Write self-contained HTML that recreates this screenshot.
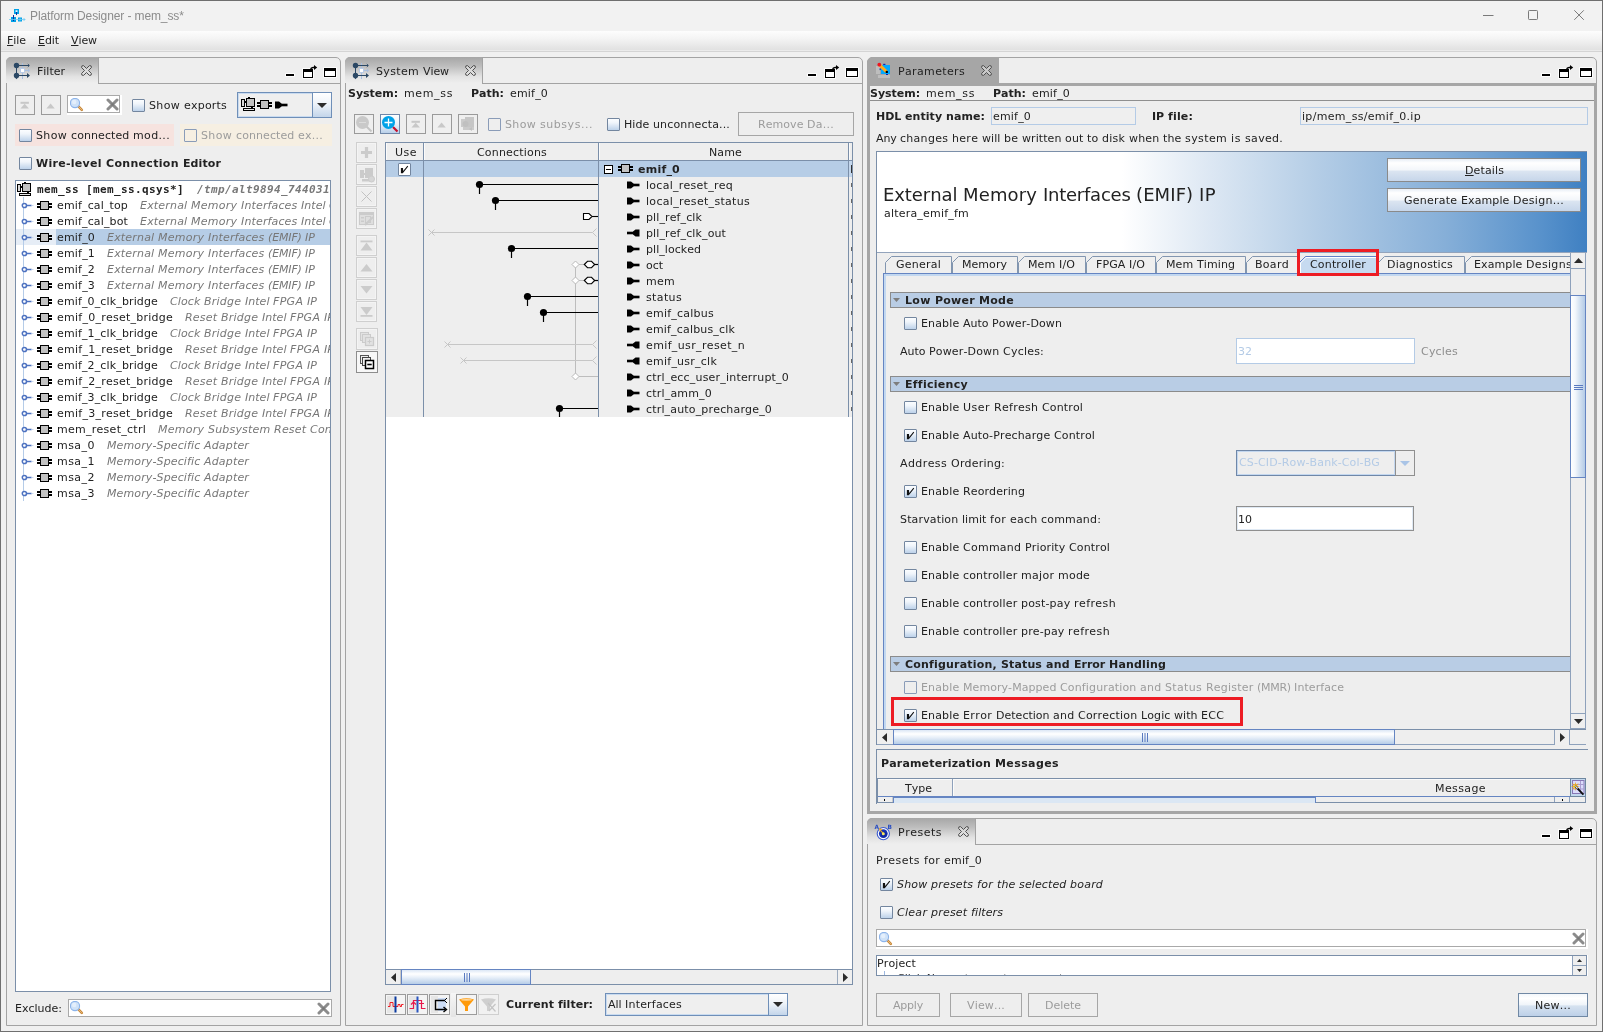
<!DOCTYPE html>
<html><head><meta charset="utf-8"><title>Platform Designer - mem_ss*</title>
<style>
html,body{margin:0;padding:0}
body{width:1603px;height:1032px;position:relative;overflow:hidden;background:#f0f0f0;font-family:"DejaVu Sans","Liberation Sans",sans-serif;color:#222222}
#root{left:0;top:0;width:1603px;height:1032px;will-change:transform;transform:translateZ(0)}
div,span,svg{position:absolute;box-sizing:border-box}
.t{white-space:nowrap;font-size:11px;line-height:13px;font-kerning:none;font-family:"DejaVu Sans","Liberation Sans",sans-serif}
.w{position:static;white-space:pre}
.b{font-weight:bold}
.i{font-style:italic}
.mb{font-family:"DejaVu Sans Mono","Liberation Mono",monospace;font-weight:bold}
.mbi{font-family:"DejaVu Sans Mono","Liberation Mono",monospace;font-weight:bold;font-style:italic}
u{text-decoration:underline;text-underline-offset:1px;text-decoration-thickness:1px}
.cb{width:13px;height:13px;border:1px solid #73869f;border-radius:1px;background:linear-gradient(180deg,#fbfdff 0%,#f0f5fb 35%,#bdd2ea 100%)}
.cbd{border-color:#8a9cb8;background:transparent}
.cbw{background:#fff}
.pn{background:#eeeeee;border:1px solid #a3a3a3;border-radius:5px 5px 0 0}
.tab{border-radius:5px 0 0 0;background:linear-gradient(180deg,#a6a6a6 0%,#bdbdbd 35%,#e2e2e2 75%,#eeeeee 100%)}
.tb{border:1px solid #9a9a9a;background:#efefef}
.tbd{border:1px solid #cfcfcf;background:#eeeeee;box-shadow:inset 0 0 0 1px #f4f4f4}
.btn{border:1px solid #8a8a8a;background:linear-gradient(180deg,#e8eef6 0%,#ffffff 18%,#f3f6fa 50%,#dbe5f1 55%,#c6d6ea 100%)}
.btnd{border:1px solid #a6a6a6;background:#eeeeee}
.sec{background:#b9cde5;border:1px solid #8b8b8b}
</style></head>
<body>
<div id="root">
<div style="left:0px;top:0px;width:1603px;height:31px;background:#f2f2f2"></div>
<div style="left:0px;top:31px;width:1603px;height:19px;background:linear-gradient(180deg,#fdfdfd 0%,#f4f4f4 40%,#e1e1e1 100%)"></div>
<div style="left:0px;top:50px;width:1603px;height:1px;background:#ebebeb"></div>
<div style="left:0px;top:51px;width:1603px;height:1px;background:#d4d4d4"></div>
<svg style="left:8px;top:8px;" width="18" height="14" viewBox="0 0 18 14"><rect x="6" y="1" width="5" height="5" fill="#00a2e8"/><rect x="7.5" y="2.3" width="2" height="1.6" fill="#fff"/><rect x="8" y="4" width="1" height="3" fill="#1030a0"/><rect x="3" y="9" width="5" height="5" fill="#00a2e8"/><rect x="5" y="7" width="1" height="6" fill="#1030a0"/><rect x="10" y="9.5" width="4" height="4" fill="#00a2e8"/><rect x="11.2" y="10.7" width="1.6" height="1.6" fill="#9fdcf6"/><path d="M1 11.5H17M15.5 10L17 11.5L15.5 13" stroke="#6cc8f0" stroke-width="0.8" fill="none"/></svg>
<span class="t" style="left:30px;top:9px;font-family:'Liberation Sans',sans-serif;font-size:12px;line-height:14px;letter-spacing:-0.11px;color:#8c8c8c">Platform Designer - mem_ss*</span>
<svg style="left:1478px;top:5px;" width="112" height="20" viewBox="0 0 112 20"><path d="M5 10.5H15.5" stroke="#7a7a7a" stroke-width="1"/><rect x="50.5" y="5.5" width="9" height="9" fill="none" stroke="#7a7a7a" stroke-width="1" rx="0.8"/><path d="M96.3 5.3L105.8 14.8M105.8 5.3L96.3 14.8" stroke="#7a7a7a" stroke-width="1"/></svg>
<span class="t" style="left:7px;top:34px;letter-spacing:-0.052px;"><u>F</u>ile</span>
<span class="t" style="left:38px;top:34px;letter-spacing:-0.075px;"><u>E</u>dit</span>
<span class="t" style="left:71px;top:34px;letter-spacing:-0.086px;"><u>V</u>iew</span>
<div class="pn" style="left:6px;top:57px;width:335px;height:969px;"></div>
<div class="tab" style="left:6px;top:57px;width:92px;height:26px;"></div>
<div style="left:98px;top:58px;width:1px;height:26px;background:#a3a3a3"></div>
<div style="left:98px;top:83px;width:243px;height:1px;background:#a3a3a3"></div>
<svg style="left:13px;top:62px;" width="18" height="18" viewBox="0 0 18 18"><rect x="9" y="1" width="1" height="16" fill="#a9bfe0"/><rect x="12" y="8" width="4" height="1" fill="#a9bfe0"/><path d="M15 6.5L17 8.5L15 10.5Z" fill="#a9bfe0"/><rect x="3" y="5" width="1" height="8" fill="#2b4865"/><rect x="5" y="3" width="11" height="1" fill="#2b4865"/><rect x="5" y="13" width="10" height="1" fill="#2b4865"/><circle cx="3.5" cy="3.5" r="2.7" fill="#2b4865"/><circle cx="3.5" cy="13.5" r="2.7" fill="#2b4865"/><path d="M3.5 17.2L1.6 15H5.4Z" fill="#2b4865"/><path d="M14.8 2L16.4 3.5L14.8 5" stroke="#2b4865" stroke-width="0.9" fill="none"/><path d="M14 11L17 13.5L14 16Z" fill="#2b4865"/><rect x="7.5" y="6.5" width="4" height="4" fill="#fff" stroke="#b9cbe6" stroke-width="1"/></svg>
<span class="t" style="left:37px;top:65px;letter-spacing:-0.007px;">Filter</span>
<svg style="left:81px;top:65px;" width="11" height="11" viewBox="0 0 11 11"><path d="M2.6 0.6Q0.2 0.2 0.6 2.6L3.5 5.5L0.6 8.4Q0.2 10.8 2.6 10.4L5.5 7.5L8.4 10.4Q10.8 10.8 10.4 8.4L7.5 5.5L10.4 2.6Q10.8 0.2 8.4 0.6L5.5 3.5Z" fill="#e6e6e6" fill-opacity=".55" stroke="#4f4f4f" stroke-width="1"/></svg>
<svg style="left:285px;top:64px;" width="52" height="15" viewBox="0 0 52 15"><g stroke="#fff" stroke-width="2" stroke-linejoin="round" opacity=".9"><rect x="1" y="10" width="8" height="2" fill="#fff"/><rect x="18" y="5" width="10" height="9"/><rect x="39" y="4" width="12" height="9"/></g><rect x="1" y="10" width="8" height="2" fill="#000"/><rect x="18.5" y="5.5" width="9" height="8" fill="#fff" stroke="#000"/><rect x="18" y="5" width="10" height="3" fill="#000"/><path d="M25.5 5.5Q26 3.3 28.5 3.5H30" stroke="#000" stroke-width="1.3" fill="none"/><path d="M29 1L32.2 3.5L29 6Z" fill="#000"/><rect x="39.5" y="4.5" width="11" height="8" fill="#fff" stroke="#000"/><rect x="39" y="4" width="12" height="3" fill="#000"/></svg>
<div class="tb" style="left:15px;top:95px;width:20px;height:20px;"></div>
<svg style="left:20px;top:101px;" width="10" height="8" viewBox="0 0 10 8"><rect x="0.5" y="0.8" width="8.4" height="2" fill="#c8c8c8"/><path d="M0.5 7.4H8.9L4.7 2.8Z" fill="#c8c8c8"/></svg>
<div class="tb" style="left:41px;top:95px;width:20px;height:20px;"></div>
<svg style="left:46px;top:102px;" width="10" height="7" viewBox="0 0 10 7"><path d="M0.4 6.4H8.8L4.6 1.4Z" fill="#c8c8c8"/></svg>
<div style="left:67px;top:95px;width:55px;height:20px;background:#fff"></div>
<div style="left:67px;top:95px;width:53px;height:18px;background:#fff;border:1px solid #a9a9a9"></div>
<svg style="left:70px;top:98px;" width="14" height="14" viewBox="0 0 14 14"><path d="M8.2 8.2L11.8 11.8" stroke="#c98a3c" stroke-width="2.6" stroke-linecap="round"/><path d="M8.6 8.6L11.6 11.6" stroke="#e8b878" stroke-width="1" stroke-linecap="round"/><circle cx="5" cy="5" r="4.6" fill="#cfe2f8" stroke="#8db4ea" stroke-width="1.1"/><circle cx="4.2" cy="4" r="2.2" fill="#e4effc"/></svg>
<svg style="left:106px;top:98px;" width="13" height="13" viewBox="0 0 13 13"><path d="M2 2L11 11M11 2L2 11" stroke="#8c8c8c" stroke-width="3" stroke-linecap="round"/><rect x="5.3" y="5.3" width="2.4" height="2.4" fill="#757575"/></svg>
<div class="cb" style="left:132px;top:99px"></div>
<span class="t" style="left:149px;top:99px;"><span class="w" style="letter-spacing:0.365px">Show </span><span class="w" style="letter-spacing:0.206px">exports</span></span>
<div style="left:237px;top:92px;width:95px;height:26px;border:1px solid #6f8fb8;background:#efefef;box-shadow:inset 0 0 0 1px #c9dbf0"></div>
<div style="left:312px;top:92px;width:20px;height:26px;border:1px solid #6f8fb8;background:linear-gradient(180deg,#ffffff 0%,#eef3f9 45%,#c3d5ea 100%)"></div>
<svg style="left:317px;top:103px;" width="10" height="5" viewBox="0 0 10 5"><path d="M0 0H10L5.0 5Z" fill="#2b2b2b"/></svg>
<svg style="left:241px;top:96px;" width="15" height="15" viewBox="0 0 15 15"><rect x="0" y="3" width="4" height="8" fill="#000"/><rect x="1" y="4" width="2" height="6" fill="#d8d8d8"/><rect x="4" y="5" width="1" height="2" fill="#000"/><rect x="7" y="1" width="2" height="1" fill="#000"/><rect x="5" y="2" width="9" height="9" fill="#000"/><rect x="6" y="3" width="7" height="7" fill="#c3c3c3"/><rect x="10" y="11" width="2" height="1" fill="#000"/><rect x="2" y="12" width="12" height="3" fill="#000"/><rect x="3" y="13" width="10" height="1" fill="#e8e8e8"/></svg>
<svg style="left:257px;top:100px;" width="15" height="10" viewBox="0 0 15 10"><rect x="0" y="2" width="15" height="2" fill="#000"/><rect x="0" y="5" width="15" height="2" fill="#000"/><rect x="3" y="0" width="9" height="9" fill="#000"/><rect x="4" y="1" width="7" height="7" fill="#c3c3c3"/></svg>
<svg style="left:275px;top:101px;" width="13" height="8" viewBox="0 0 13 8"><path d="M0 0.5H4L6.5 2.5V5.5L4 7.5H0Z" fill="#000"/><rect x="6" y="2.7" width="6.5" height="2.6" fill="#000"/></svg>
<div style="left:15px;top:124px;width:159px;height:22px;background:#f6e3df"></div>
<div class="cb" style="left:19px;top:129px"></div>
<span class="t" style="left:36px;top:129px;"><span class="w" style="letter-spacing:0.365px">Show </span><span class="w" style="letter-spacing:0.090px">connected </span><span class="w" style="letter-spacing:0.347px">mod...</span></span>
<div style="left:180px;top:124px;width:152px;height:22px;background:#f6efe2"></div>
<div class="cb cbd" style="left:184px;top:129px"></div>
<span class="t" style="left:201px;top:129px;color:#9c9c9c;"><span class="w" style="letter-spacing:0.365px">Show </span><span class="w" style="letter-spacing:0.090px">connected </span><span class="w" style="letter-spacing:0.247px">ex...</span></span>
<div class="cb" style="left:19px;top:157px"></div>
<span class="t b" style="left:36px;top:157px;"><span class="w" style="letter-spacing:0.289px">Wire-level </span><span class="w" style="letter-spacing:0.316px">Connection </span><span class="w" style="letter-spacing:0.100px">Editor</span></span>
<div style="left:15px;top:180px;width:316px;height:812px;background:#fff;border:1px solid #7b8fa9"></div>
<div style="left:16px;top:229px;width:40px;height:16px;background:#e6edf6"></div>
<div style="left:56px;top:229px;width:274px;height:16px;background:#b6cde6"></div>
<div style="left:23px;top:197px;width:1px;height:304px;background:#b5cce8"></div>
<svg style="left:17px;top:181px;" width="15" height="15" viewBox="0 0 15 15"><rect x="0" y="3" width="4" height="8" fill="#000"/><rect x="1" y="4" width="2" height="6" fill="#d8d8d8"/><rect x="4" y="5" width="1" height="2" fill="#000"/><rect x="7" y="1" width="2" height="1" fill="#000"/><rect x="5" y="2" width="9" height="9" fill="#000"/><rect x="6" y="3" width="7" height="7" fill="#c3c3c3"/><rect x="10" y="11" width="2" height="1" fill="#000"/><rect x="2" y="12" width="12" height="3" fill="#000"/><rect x="3" y="13" width="10" height="1" fill="#e8e8e8"/></svg>
<span class="t mb" style="left:37px;top:183px;"><span class="w" style="letter-spacing:0.377px">mem_ss </span><span class="w" style="letter-spacing:0.377px">[mem_ss.qsys*]</span></span>
<span class="t mbi" style="left:197px;top:183px;color:#787878;width:133px;overflow:hidden;letter-spacing:0.377px;">/tmp/alt9894_744031</span>
<div style="left:16px;top:181px;width:314px;height:810px;overflow:hidden">
<svg style="left:4.6px;top:20.5px;" width="13" height="7" viewBox="0 0 13 7"><path d="M5.5 3.5H10.6" stroke="#4d72c0" stroke-width="1.5"/><path d="M10.6 3.5H12.5" stroke="#c5d6ee" stroke-width="1"/><circle cx="3.4" cy="3.5" r="2.1" fill="#fff" stroke="#4d72c0" stroke-width="1.5"/></svg>
<svg style="left:21px;top:20px;" width="15" height="10" viewBox="0 0 15 10"><rect x="0" y="2" width="15" height="2" fill="#000"/><rect x="0" y="5" width="15" height="2" fill="#000"/><rect x="3" y="0" width="9" height="9" fill="#000"/><rect x="4" y="1" width="7" height="7" fill="#c3c3c3"/></svg>
<span class="t" style="left:41px;top:18px;letter-spacing:0.143px;">emif_cal_top</span>
<span class="t i" style="left:124px;top:18px;color:#777777;"><span class="w" style="letter-spacing:0.186px">External </span><span class="w" style="letter-spacing:0.253px">Memory </span><span class="w" style="letter-spacing:0.139px">Interfaces </span><span class="w" style="letter-spacing:0.025px">Intel </span><span class="w" style="letter-spacing:0.138px">Calibration </span><span class="w" style="letter-spacing:0.061px">IP</span></span>
<svg style="left:4.6px;top:36.5px;" width="13" height="7" viewBox="0 0 13 7"><path d="M5.5 3.5H10.6" stroke="#4d72c0" stroke-width="1.5"/><path d="M10.6 3.5H12.5" stroke="#c5d6ee" stroke-width="1"/><circle cx="3.4" cy="3.5" r="2.1" fill="#fff" stroke="#4d72c0" stroke-width="1.5"/></svg>
<svg style="left:21px;top:36px;" width="15" height="10" viewBox="0 0 15 10"><rect x="0" y="2" width="15" height="2" fill="#000"/><rect x="0" y="5" width="15" height="2" fill="#000"/><rect x="3" y="0" width="9" height="9" fill="#000"/><rect x="4" y="1" width="7" height="7" fill="#c3c3c3"/></svg>
<span class="t" style="left:41px;top:34px;letter-spacing:0.143px;">emif_cal_bot</span>
<span class="t i" style="left:124px;top:34px;color:#777777;"><span class="w" style="letter-spacing:0.186px">External </span><span class="w" style="letter-spacing:0.253px">Memory </span><span class="w" style="letter-spacing:0.139px">Interfaces </span><span class="w" style="letter-spacing:0.025px">Intel </span><span class="w" style="letter-spacing:0.138px">Calibration </span><span class="w" style="letter-spacing:0.061px">IP</span></span>
<svg style="left:4.6px;top:52.5px;" width="13" height="7" viewBox="0 0 13 7"><path d="M5.5 3.5H10.6" stroke="#4d72c0" stroke-width="1.5"/><path d="M10.6 3.5H12.5" stroke="#c5d6ee" stroke-width="1"/><circle cx="3.4" cy="3.5" r="2.1" fill="#fff" stroke="#4d72c0" stroke-width="1.5"/></svg>
<svg style="left:21px;top:52px;" width="15" height="10" viewBox="0 0 15 10"><rect x="0" y="2" width="15" height="2" fill="#000"/><rect x="0" y="5" width="15" height="2" fill="#000"/><rect x="3" y="0" width="9" height="9" fill="#000"/><rect x="4" y="1" width="7" height="7" fill="#c3c3c3"/></svg>
<span class="t" style="left:41px;top:50px;letter-spacing:0.182px;">emif_0</span>
<span class="t i" style="left:91px;top:50px;color:#777777;"><span class="w" style="letter-spacing:0.186px">External </span><span class="w" style="letter-spacing:0.253px">Memory </span><span class="w" style="letter-spacing:0.139px">Interfaces </span><span class="w" style="letter-spacing:-0.156px">(EMIF) </span><span class="w" style="letter-spacing:0.061px">IP</span></span>
<svg style="left:4.6px;top:68.5px;" width="13" height="7" viewBox="0 0 13 7"><path d="M5.5 3.5H10.6" stroke="#4d72c0" stroke-width="1.5"/><path d="M10.6 3.5H12.5" stroke="#c5d6ee" stroke-width="1"/><circle cx="3.4" cy="3.5" r="2.1" fill="#fff" stroke="#4d72c0" stroke-width="1.5"/></svg>
<svg style="left:21px;top:68px;" width="15" height="10" viewBox="0 0 15 10"><rect x="0" y="2" width="15" height="2" fill="#000"/><rect x="0" y="5" width="15" height="2" fill="#000"/><rect x="3" y="0" width="9" height="9" fill="#000"/><rect x="4" y="1" width="7" height="7" fill="#c3c3c3"/></svg>
<span class="t" style="left:41px;top:66px;letter-spacing:0.182px;">emif_1</span>
<span class="t i" style="left:91px;top:66px;color:#777777;"><span class="w" style="letter-spacing:0.186px">External </span><span class="w" style="letter-spacing:0.253px">Memory </span><span class="w" style="letter-spacing:0.139px">Interfaces </span><span class="w" style="letter-spacing:-0.156px">(EMIF) </span><span class="w" style="letter-spacing:0.061px">IP</span></span>
<svg style="left:4.6px;top:84.5px;" width="13" height="7" viewBox="0 0 13 7"><path d="M5.5 3.5H10.6" stroke="#4d72c0" stroke-width="1.5"/><path d="M10.6 3.5H12.5" stroke="#c5d6ee" stroke-width="1"/><circle cx="3.4" cy="3.5" r="2.1" fill="#fff" stroke="#4d72c0" stroke-width="1.5"/></svg>
<svg style="left:21px;top:84px;" width="15" height="10" viewBox="0 0 15 10"><rect x="0" y="2" width="15" height="2" fill="#000"/><rect x="0" y="5" width="15" height="2" fill="#000"/><rect x="3" y="0" width="9" height="9" fill="#000"/><rect x="4" y="1" width="7" height="7" fill="#c3c3c3"/></svg>
<span class="t" style="left:41px;top:82px;letter-spacing:0.182px;">emif_2</span>
<span class="t i" style="left:91px;top:82px;color:#777777;"><span class="w" style="letter-spacing:0.186px">External </span><span class="w" style="letter-spacing:0.253px">Memory </span><span class="w" style="letter-spacing:0.139px">Interfaces </span><span class="w" style="letter-spacing:-0.156px">(EMIF) </span><span class="w" style="letter-spacing:0.061px">IP</span></span>
<svg style="left:4.6px;top:100.5px;" width="13" height="7" viewBox="0 0 13 7"><path d="M5.5 3.5H10.6" stroke="#4d72c0" stroke-width="1.5"/><path d="M10.6 3.5H12.5" stroke="#c5d6ee" stroke-width="1"/><circle cx="3.4" cy="3.5" r="2.1" fill="#fff" stroke="#4d72c0" stroke-width="1.5"/></svg>
<svg style="left:21px;top:100px;" width="15" height="10" viewBox="0 0 15 10"><rect x="0" y="2" width="15" height="2" fill="#000"/><rect x="0" y="5" width="15" height="2" fill="#000"/><rect x="3" y="0" width="9" height="9" fill="#000"/><rect x="4" y="1" width="7" height="7" fill="#c3c3c3"/></svg>
<span class="t" style="left:41px;top:98px;letter-spacing:0.182px;">emif_3</span>
<span class="t i" style="left:91px;top:98px;color:#777777;"><span class="w" style="letter-spacing:0.186px">External </span><span class="w" style="letter-spacing:0.253px">Memory </span><span class="w" style="letter-spacing:0.139px">Interfaces </span><span class="w" style="letter-spacing:-0.156px">(EMIF) </span><span class="w" style="letter-spacing:0.061px">IP</span></span>
<svg style="left:4.6px;top:116.5px;" width="13" height="7" viewBox="0 0 13 7"><path d="M5.5 3.5H10.6" stroke="#4d72c0" stroke-width="1.5"/><path d="M10.6 3.5H12.5" stroke="#c5d6ee" stroke-width="1"/><circle cx="3.4" cy="3.5" r="2.1" fill="#fff" stroke="#4d72c0" stroke-width="1.5"/></svg>
<svg style="left:21px;top:116px;" width="15" height="10" viewBox="0 0 15 10"><rect x="0" y="2" width="15" height="2" fill="#000"/><rect x="0" y="5" width="15" height="2" fill="#000"/><rect x="3" y="0" width="9" height="9" fill="#000"/><rect x="4" y="1" width="7" height="7" fill="#c3c3c3"/></svg>
<span class="t" style="left:41px;top:114px;letter-spacing:0.137px;">emif_0_clk_bridge</span>
<span class="t i" style="left:154px;top:114px;color:#777777;"><span class="w" style="letter-spacing:0.103px">Clock </span><span class="w" style="letter-spacing:0.235px">Bridge </span><span class="w" style="letter-spacing:0.025px">Intel </span><span class="w" style="letter-spacing:0.299px">FPGA </span><span class="w" style="letter-spacing:0.061px">IP</span></span>
<svg style="left:4.6px;top:132.5px;" width="13" height="7" viewBox="0 0 13 7"><path d="M5.5 3.5H10.6" stroke="#4d72c0" stroke-width="1.5"/><path d="M10.6 3.5H12.5" stroke="#c5d6ee" stroke-width="1"/><circle cx="3.4" cy="3.5" r="2.1" fill="#fff" stroke="#4d72c0" stroke-width="1.5"/></svg>
<svg style="left:21px;top:132px;" width="15" height="10" viewBox="0 0 15 10"><rect x="0" y="2" width="15" height="2" fill="#000"/><rect x="0" y="5" width="15" height="2" fill="#000"/><rect x="3" y="0" width="9" height="9" fill="#000"/><rect x="4" y="1" width="7" height="7" fill="#c3c3c3"/></svg>
<span class="t" style="left:41px;top:130px;letter-spacing:0.247px;">emif_0_reset_bridge</span>
<span class="t i" style="left:169px;top:130px;color:#777777;"><span class="w" style="letter-spacing:0.214px">Reset </span><span class="w" style="letter-spacing:0.235px">Bridge </span><span class="w" style="letter-spacing:0.025px">Intel </span><span class="w" style="letter-spacing:0.299px">FPGA </span><span class="w" style="letter-spacing:0.061px">IP</span></span>
<svg style="left:4.6px;top:148.5px;" width="13" height="7" viewBox="0 0 13 7"><path d="M5.5 3.5H10.6" stroke="#4d72c0" stroke-width="1.5"/><path d="M10.6 3.5H12.5" stroke="#c5d6ee" stroke-width="1"/><circle cx="3.4" cy="3.5" r="2.1" fill="#fff" stroke="#4d72c0" stroke-width="1.5"/></svg>
<svg style="left:21px;top:148px;" width="15" height="10" viewBox="0 0 15 10"><rect x="0" y="2" width="15" height="2" fill="#000"/><rect x="0" y="5" width="15" height="2" fill="#000"/><rect x="3" y="0" width="9" height="9" fill="#000"/><rect x="4" y="1" width="7" height="7" fill="#c3c3c3"/></svg>
<span class="t" style="left:41px;top:146px;letter-spacing:0.137px;">emif_1_clk_bridge</span>
<span class="t i" style="left:154px;top:146px;color:#777777;"><span class="w" style="letter-spacing:0.103px">Clock </span><span class="w" style="letter-spacing:0.235px">Bridge </span><span class="w" style="letter-spacing:0.025px">Intel </span><span class="w" style="letter-spacing:0.299px">FPGA </span><span class="w" style="letter-spacing:0.061px">IP</span></span>
<svg style="left:4.6px;top:164.5px;" width="13" height="7" viewBox="0 0 13 7"><path d="M5.5 3.5H10.6" stroke="#4d72c0" stroke-width="1.5"/><path d="M10.6 3.5H12.5" stroke="#c5d6ee" stroke-width="1"/><circle cx="3.4" cy="3.5" r="2.1" fill="#fff" stroke="#4d72c0" stroke-width="1.5"/></svg>
<svg style="left:21px;top:164px;" width="15" height="10" viewBox="0 0 15 10"><rect x="0" y="2" width="15" height="2" fill="#000"/><rect x="0" y="5" width="15" height="2" fill="#000"/><rect x="3" y="0" width="9" height="9" fill="#000"/><rect x="4" y="1" width="7" height="7" fill="#c3c3c3"/></svg>
<span class="t" style="left:41px;top:162px;letter-spacing:0.247px;">emif_1_reset_bridge</span>
<span class="t i" style="left:169px;top:162px;color:#777777;"><span class="w" style="letter-spacing:0.214px">Reset </span><span class="w" style="letter-spacing:0.235px">Bridge </span><span class="w" style="letter-spacing:0.025px">Intel </span><span class="w" style="letter-spacing:0.299px">FPGA </span><span class="w" style="letter-spacing:0.061px">IP</span></span>
<svg style="left:4.6px;top:180.5px;" width="13" height="7" viewBox="0 0 13 7"><path d="M5.5 3.5H10.6" stroke="#4d72c0" stroke-width="1.5"/><path d="M10.6 3.5H12.5" stroke="#c5d6ee" stroke-width="1"/><circle cx="3.4" cy="3.5" r="2.1" fill="#fff" stroke="#4d72c0" stroke-width="1.5"/></svg>
<svg style="left:21px;top:180px;" width="15" height="10" viewBox="0 0 15 10"><rect x="0" y="2" width="15" height="2" fill="#000"/><rect x="0" y="5" width="15" height="2" fill="#000"/><rect x="3" y="0" width="9" height="9" fill="#000"/><rect x="4" y="1" width="7" height="7" fill="#c3c3c3"/></svg>
<span class="t" style="left:41px;top:178px;letter-spacing:0.137px;">emif_2_clk_bridge</span>
<span class="t i" style="left:154px;top:178px;color:#777777;"><span class="w" style="letter-spacing:0.103px">Clock </span><span class="w" style="letter-spacing:0.235px">Bridge </span><span class="w" style="letter-spacing:0.025px">Intel </span><span class="w" style="letter-spacing:0.299px">FPGA </span><span class="w" style="letter-spacing:0.061px">IP</span></span>
<svg style="left:4.6px;top:196.5px;" width="13" height="7" viewBox="0 0 13 7"><path d="M5.5 3.5H10.6" stroke="#4d72c0" stroke-width="1.5"/><path d="M10.6 3.5H12.5" stroke="#c5d6ee" stroke-width="1"/><circle cx="3.4" cy="3.5" r="2.1" fill="#fff" stroke="#4d72c0" stroke-width="1.5"/></svg>
<svg style="left:21px;top:196px;" width="15" height="10" viewBox="0 0 15 10"><rect x="0" y="2" width="15" height="2" fill="#000"/><rect x="0" y="5" width="15" height="2" fill="#000"/><rect x="3" y="0" width="9" height="9" fill="#000"/><rect x="4" y="1" width="7" height="7" fill="#c3c3c3"/></svg>
<span class="t" style="left:41px;top:194px;letter-spacing:0.247px;">emif_2_reset_bridge</span>
<span class="t i" style="left:169px;top:194px;color:#777777;"><span class="w" style="letter-spacing:0.214px">Reset </span><span class="w" style="letter-spacing:0.235px">Bridge </span><span class="w" style="letter-spacing:0.025px">Intel </span><span class="w" style="letter-spacing:0.299px">FPGA </span><span class="w" style="letter-spacing:0.061px">IP</span></span>
<svg style="left:4.6px;top:212.5px;" width="13" height="7" viewBox="0 0 13 7"><path d="M5.5 3.5H10.6" stroke="#4d72c0" stroke-width="1.5"/><path d="M10.6 3.5H12.5" stroke="#c5d6ee" stroke-width="1"/><circle cx="3.4" cy="3.5" r="2.1" fill="#fff" stroke="#4d72c0" stroke-width="1.5"/></svg>
<svg style="left:21px;top:212px;" width="15" height="10" viewBox="0 0 15 10"><rect x="0" y="2" width="15" height="2" fill="#000"/><rect x="0" y="5" width="15" height="2" fill="#000"/><rect x="3" y="0" width="9" height="9" fill="#000"/><rect x="4" y="1" width="7" height="7" fill="#c3c3c3"/></svg>
<span class="t" style="left:41px;top:210px;letter-spacing:0.137px;">emif_3_clk_bridge</span>
<span class="t i" style="left:154px;top:210px;color:#777777;"><span class="w" style="letter-spacing:0.103px">Clock </span><span class="w" style="letter-spacing:0.235px">Bridge </span><span class="w" style="letter-spacing:0.025px">Intel </span><span class="w" style="letter-spacing:0.299px">FPGA </span><span class="w" style="letter-spacing:0.061px">IP</span></span>
<svg style="left:4.6px;top:228.5px;" width="13" height="7" viewBox="0 0 13 7"><path d="M5.5 3.5H10.6" stroke="#4d72c0" stroke-width="1.5"/><path d="M10.6 3.5H12.5" stroke="#c5d6ee" stroke-width="1"/><circle cx="3.4" cy="3.5" r="2.1" fill="#fff" stroke="#4d72c0" stroke-width="1.5"/></svg>
<svg style="left:21px;top:228px;" width="15" height="10" viewBox="0 0 15 10"><rect x="0" y="2" width="15" height="2" fill="#000"/><rect x="0" y="5" width="15" height="2" fill="#000"/><rect x="3" y="0" width="9" height="9" fill="#000"/><rect x="4" y="1" width="7" height="7" fill="#c3c3c3"/></svg>
<span class="t" style="left:41px;top:226px;letter-spacing:0.247px;">emif_3_reset_bridge</span>
<span class="t i" style="left:169px;top:226px;color:#777777;"><span class="w" style="letter-spacing:0.214px">Reset </span><span class="w" style="letter-spacing:0.235px">Bridge </span><span class="w" style="letter-spacing:0.025px">Intel </span><span class="w" style="letter-spacing:0.299px">FPGA </span><span class="w" style="letter-spacing:0.061px">IP</span></span>
<svg style="left:4.6px;top:244.5px;" width="13" height="7" viewBox="0 0 13 7"><path d="M5.5 3.5H10.6" stroke="#4d72c0" stroke-width="1.5"/><path d="M10.6 3.5H12.5" stroke="#c5d6ee" stroke-width="1"/><circle cx="3.4" cy="3.5" r="2.1" fill="#fff" stroke="#4d72c0" stroke-width="1.5"/></svg>
<svg style="left:21px;top:244px;" width="15" height="10" viewBox="0 0 15 10"><rect x="0" y="2" width="15" height="2" fill="#000"/><rect x="0" y="5" width="15" height="2" fill="#000"/><rect x="3" y="0" width="9" height="9" fill="#000"/><rect x="4" y="1" width="7" height="7" fill="#c3c3c3"/></svg>
<span class="t" style="left:41px;top:242px;letter-spacing:0.269px;">mem_reset_ctrl</span>
<span class="t i" style="left:142px;top:242px;color:#777777;"><span class="w" style="letter-spacing:0.253px">Memory </span><span class="w" style="letter-spacing:0.180px">Subsystem </span><span class="w" style="letter-spacing:0.214px">Reset </span><span class="w" style="letter-spacing:0.165px">Controller</span></span>
<svg style="left:4.6px;top:260.5px;" width="13" height="7" viewBox="0 0 13 7"><path d="M5.5 3.5H10.6" stroke="#4d72c0" stroke-width="1.5"/><path d="M10.6 3.5H12.5" stroke="#c5d6ee" stroke-width="1"/><circle cx="3.4" cy="3.5" r="2.1" fill="#fff" stroke="#4d72c0" stroke-width="1.5"/></svg>
<svg style="left:21px;top:260px;" width="15" height="10" viewBox="0 0 15 10"><rect x="0" y="2" width="15" height="2" fill="#000"/><rect x="0" y="5" width="15" height="2" fill="#000"/><rect x="3" y="0" width="9" height="9" fill="#000"/><rect x="4" y="1" width="7" height="7" fill="#c3c3c3"/></svg>
<span class="t" style="left:41px;top:258px;letter-spacing:0.463px;">msa_0</span>
<span class="t i" style="left:91px;top:258px;color:#777777;"><span class="w" style="letter-spacing:0.124px">Memory-Specific </span><span class="w" style="letter-spacing:0.167px">Adapter</span></span>
<svg style="left:4.6px;top:276.5px;" width="13" height="7" viewBox="0 0 13 7"><path d="M5.5 3.5H10.6" stroke="#4d72c0" stroke-width="1.5"/><path d="M10.6 3.5H12.5" stroke="#c5d6ee" stroke-width="1"/><circle cx="3.4" cy="3.5" r="2.1" fill="#fff" stroke="#4d72c0" stroke-width="1.5"/></svg>
<svg style="left:21px;top:276px;" width="15" height="10" viewBox="0 0 15 10"><rect x="0" y="2" width="15" height="2" fill="#000"/><rect x="0" y="5" width="15" height="2" fill="#000"/><rect x="3" y="0" width="9" height="9" fill="#000"/><rect x="4" y="1" width="7" height="7" fill="#c3c3c3"/></svg>
<span class="t" style="left:41px;top:274px;letter-spacing:0.463px;">msa_1</span>
<span class="t i" style="left:91px;top:274px;color:#777777;"><span class="w" style="letter-spacing:0.124px">Memory-Specific </span><span class="w" style="letter-spacing:0.167px">Adapter</span></span>
<svg style="left:4.6px;top:292.5px;" width="13" height="7" viewBox="0 0 13 7"><path d="M5.5 3.5H10.6" stroke="#4d72c0" stroke-width="1.5"/><path d="M10.6 3.5H12.5" stroke="#c5d6ee" stroke-width="1"/><circle cx="3.4" cy="3.5" r="2.1" fill="#fff" stroke="#4d72c0" stroke-width="1.5"/></svg>
<svg style="left:21px;top:292px;" width="15" height="10" viewBox="0 0 15 10"><rect x="0" y="2" width="15" height="2" fill="#000"/><rect x="0" y="5" width="15" height="2" fill="#000"/><rect x="3" y="0" width="9" height="9" fill="#000"/><rect x="4" y="1" width="7" height="7" fill="#c3c3c3"/></svg>
<span class="t" style="left:41px;top:290px;letter-spacing:0.463px;">msa_2</span>
<span class="t i" style="left:91px;top:290px;color:#777777;"><span class="w" style="letter-spacing:0.124px">Memory-Specific </span><span class="w" style="letter-spacing:0.167px">Adapter</span></span>
<svg style="left:4.6px;top:308.5px;" width="13" height="7" viewBox="0 0 13 7"><path d="M5.5 3.5H10.6" stroke="#4d72c0" stroke-width="1.5"/><path d="M10.6 3.5H12.5" stroke="#c5d6ee" stroke-width="1"/><circle cx="3.4" cy="3.5" r="2.1" fill="#fff" stroke="#4d72c0" stroke-width="1.5"/></svg>
<svg style="left:21px;top:308px;" width="15" height="10" viewBox="0 0 15 10"><rect x="0" y="2" width="15" height="2" fill="#000"/><rect x="0" y="5" width="15" height="2" fill="#000"/><rect x="3" y="0" width="9" height="9" fill="#000"/><rect x="4" y="1" width="7" height="7" fill="#c3c3c3"/></svg>
<span class="t" style="left:41px;top:306px;letter-spacing:0.463px;">msa_3</span>
<span class="t i" style="left:91px;top:306px;color:#777777;"><span class="w" style="letter-spacing:0.124px">Memory-Specific </span><span class="w" style="letter-spacing:0.167px">Adapter</span></span>
</div>
<span class="t" style="left:15px;top:1002px;letter-spacing:0.001px;">Exclude:</span>
<div style="left:68px;top:999px;width:264px;height:18px;background:#fff;border:1px solid #a9a9a9"></div>
<svg style="left:70px;top:1001px;" width="14" height="14" viewBox="0 0 14 14"><path d="M8.2 8.2L11.8 11.8" stroke="#c98a3c" stroke-width="2.6" stroke-linecap="round"/><path d="M8.6 8.6L11.6 11.6" stroke="#e8b878" stroke-width="1" stroke-linecap="round"/><circle cx="5" cy="5" r="4.6" fill="#cfe2f8" stroke="#8db4ea" stroke-width="1.1"/><circle cx="4.2" cy="4" r="2.2" fill="#e4effc"/></svg>
<svg style="left:317px;top:1002px;" width="13" height="13" viewBox="0 0 13 13"><path d="M2 2L11 11M11 2L2 11" stroke="#8c8c8c" stroke-width="3" stroke-linecap="round"/><rect x="5.3" y="5.3" width="2.4" height="2.4" fill="#757575"/></svg>
<div class="pn" style="left:345px;top:57px;width:518px;height:969px;"></div>
<div class="tab" style="left:345px;top:57px;width:137px;height:26px;"></div>
<div style="left:482px;top:58px;width:1px;height:26px;background:#a3a3a3"></div>
<div style="left:482px;top:83px;width:381px;height:1px;background:#a3a3a3"></div>
<svg style="left:352px;top:62px;" width="18" height="18" viewBox="0 0 18 18"><rect x="9" y="1" width="1" height="16" fill="#a9bfe0"/><rect x="12" y="8" width="4" height="1" fill="#a9bfe0"/><path d="M15 6.5L17 8.5L15 10.5Z" fill="#a9bfe0"/><rect x="3" y="5" width="1" height="8" fill="#2b4865"/><rect x="5" y="3" width="11" height="1" fill="#2b4865"/><rect x="5" y="13" width="10" height="1" fill="#2b4865"/><circle cx="3.5" cy="3.5" r="2.7" fill="#2b4865"/><circle cx="3.5" cy="13.5" r="2.7" fill="#2b4865"/><path d="M3.5 17.2L1.6 15H5.4Z" fill="#2b4865"/><path d="M14.8 2L16.4 3.5L14.8 5" stroke="#2b4865" stroke-width="0.9" fill="none"/><path d="M14 11L17 13.5L14 16Z" fill="#2b4865"/><rect x="7.5" y="6.5" width="4" height="4" fill="#fff" stroke="#b9cbe6" stroke-width="1"/></svg>
<span class="t" style="left:376px;top:65px;"><span class="w" style="letter-spacing:0.355px">System </span><span class="w" style="letter-spacing:-0.086px">View</span></span>
<svg style="left:465px;top:65px;" width="11" height="11" viewBox="0 0 11 11"><path d="M2.6 0.6Q0.2 0.2 0.6 2.6L3.5 5.5L0.6 8.4Q0.2 10.8 2.6 10.4L5.5 7.5L8.4 10.4Q10.8 10.8 10.4 8.4L7.5 5.5L10.4 2.6Q10.8 0.2 8.4 0.6L5.5 3.5Z" fill="#e6e6e6" fill-opacity=".55" stroke="#4f4f4f" stroke-width="1"/></svg>
<svg style="left:807px;top:64px;" width="52" height="15" viewBox="0 0 52 15"><g stroke="#fff" stroke-width="2" stroke-linejoin="round" opacity=".9"><rect x="1" y="10" width="8" height="2" fill="#fff"/><rect x="18" y="5" width="10" height="9"/><rect x="39" y="4" width="12" height="9"/></g><rect x="1" y="10" width="8" height="2" fill="#000"/><rect x="18.5" y="5.5" width="9" height="8" fill="#fff" stroke="#000"/><rect x="18" y="5" width="10" height="3" fill="#000"/><path d="M25.5 5.5Q26 3.3 28.5 3.5H30" stroke="#000" stroke-width="1.3" fill="none"/><path d="M29 1L32.2 3.5L29 6Z" fill="#000"/><rect x="39.5" y="4.5" width="11" height="8" fill="#fff" stroke="#000"/><rect x="39" y="4" width="12" height="3" fill="#000"/></svg>
<span class="t b" style="left:348px;top:87px;letter-spacing:-0.031px;">System:</span>
<span class="t" style="left:404px;top:87px;letter-spacing:0.640px;">mem_ss</span>
<span class="t b" style="left:471px;top:87px;letter-spacing:0.005px;">Path:</span>
<span class="t" style="left:510px;top:87px;letter-spacing:0.182px;">emif_0</span>
<div class="tb" style="left:354px;top:114px;width:20px;height:20px;"></div>
<svg style="left:355px;top:115px;" width="18" height="18" viewBox="0 0 18 18"><path d="M11 11L16.5 16.5" stroke="#c4c4c4" stroke-width="2"/><circle cx="7.5" cy="7.5" r="6.5" fill="#c9c9c9"/><rect x="4" y="7" width="7" height="1" fill="#dcdcdc"/></svg>
<div style="left:380px;top:114px;width:20px;height:20px;border:1px solid #6f87a8;background:linear-gradient(180deg,#ffffff 0%,#eaf1f9 50%,#b9d0ea 100%)"></div>
<svg style="left:381px;top:115px;" width="18" height="18" viewBox="0 0 18 18"><path d="M12 12L16.5 16.5" stroke="#c4102c" stroke-width="2.2"/><circle cx="7.5" cy="7.4" r="6.5" fill="#00a2e8"/><path d="M7.5 3.5V11.5M3.5 7.5H11.5" stroke="#fff" stroke-width="1.3"/></svg>
<div class="tb" style="left:406px;top:114px;width:20px;height:20px;"></div>
<svg style="left:411px;top:120px;" width="10" height="8" viewBox="0 0 10 8"><rect x="0.5" y="0.8" width="8.4" height="2" fill="#c8c8c8"/><path d="M0.5 7.4H8.9L4.7 2.8Z" fill="#c8c8c8"/></svg>
<div class="tb" style="left:432px;top:114px;width:20px;height:20px;"></div>
<svg style="left:437px;top:121px;" width="10" height="7" viewBox="0 0 10 7"><path d="M0.4 6.4H8.8L4.6 1.4Z" fill="#c8c8c8"/></svg>
<div class="tb" style="left:458px;top:114px;width:20px;height:20px;"></div>
<svg style="left:460px;top:116px;" width="16" height="16" viewBox="0 0 16 16"><rect x="1" y="3" width="6" height="8" fill="#cbcbcb"/><rect x="5" y="1" width="9" height="10" fill="#c6c6c6"/><rect x="3" y="11" width="11" height="3" fill="#cbcbcb"/><circle cx="5.5" cy="8" r="3" fill="#c0c0c0"/><path d="M9 13L12 15L12 11Z" fill="#c0c0c0"/></svg>
<div class="cb cbd" style="left:488px;top:118px"></div>
<span class="t" style="left:505px;top:118px;color:#9c9c9c;"><span class="w" style="letter-spacing:0.365px">Show </span><span class="w" style="letter-spacing:0.539px">subsys...</span></span>
<div class="cb" style="left:607px;top:118px"></div>
<span class="t" style="left:624px;top:118px;"><span class="w" style="letter-spacing:0.085px">Hide </span><span class="w" style="letter-spacing:0.152px">unconnecta...</span></span>
<div class="btnd" style="left:738px;top:112px;width:116px;height:24px;"></div>
<span class="t" style="left:758px;top:118px;color:#9c9c9c;"><span class="w" style="letter-spacing:0.053px">Remove </span><span class="w" style="letter-spacing:0.260px">Da...</span></span>
<div class="tbd" style="left:356px;top:142px;width:21px;height:21px;"></div>
<div class="tbd" style="left:356px;top:164px;width:21px;height:21px;"></div>
<div class="tbd" style="left:356px;top:186px;width:21px;height:21px;"></div>
<div class="tbd" style="left:356px;top:208px;width:21px;height:21px;"></div>
<div class="tbd" style="left:356px;top:235px;width:21px;height:21px;"></div>
<div class="tbd" style="left:356px;top:257px;width:21px;height:21px;"></div>
<div class="tbd" style="left:356px;top:279px;width:21px;height:21px;"></div>
<div class="tbd" style="left:356px;top:301px;width:21px;height:21px;"></div>
<div class="tbd" style="left:356px;top:328px;width:22px;height:22px;"></div>
<div style="left:356px;top:351px;width:22px;height:22px;border:1px solid #8d8d8d;background:#f7f7f7"></div>
<svg style="left:356px;top:142px;" width="21" height="21" viewBox="0 0 21 21"><path d="M10.5 5V16M5 10.5H16" stroke="#cbcbcb" stroke-width="3.2"/></svg>
<svg style="left:356px;top:164px;" width="21" height="21" viewBox="0 0 21 21"><rect x="4" y="6" width="4" height="8" fill="#cbcbcb"/><rect x="8" y="9" width="2" height="2" fill="#cbcbcb"/><rect x="9" y="4" width="8" height="10" fill="#cbcbcb"/><rect x="6" y="15" width="11" height="2.5" fill="#cbcbcb"/><circle cx="15.5" cy="15" r="3" fill="#d6d6d6" stroke="#cbcbcb"/></svg>
<svg style="left:356px;top:186px;" width="21" height="21" viewBox="0 0 21 21"><path d="M5.5 5.5L15.5 15.5M15.5 5.5L5.5 15.5" stroke="#c2c2c2" stroke-width="1"/></svg>
<svg style="left:356px;top:208px;" width="21" height="21" viewBox="0 0 21 21"><rect x="3.5" y="4.5" width="14" height="12" fill="#dedede" stroke="#cbcbcb"/><rect x="3" y="4" width="15" height="3" fill="#cbcbcb"/><rect x="5" y="9" width="3" height="1.5" fill="#cbcbcb"/><rect x="5" y="12.5" width="3" height="1.5" fill="#cbcbcb"/><rect x="9.5" y="8.5" width="5" height="6" fill="none" stroke="#cbcbcb"/><path d="M9 17L17 9" stroke="#cbcbcb" stroke-width="2.2"/></svg>
<svg style="left:356px;top:235px;" width="21" height="21" viewBox="0 0 21 21"><rect x="4.5" y="5.5" width="12" height="1.8" fill="#cbcbcb"/><path d="M4.5 15.5H16.5L10.5 7.5Z" fill="#cbcbcb"/></svg>
<svg style="left:356px;top:257px;" width="21" height="21" viewBox="0 0 21 21"><path d="M4.5 14.5H16.5L10.5 7Z" fill="#cbcbcb"/></svg>
<svg style="left:356px;top:279px;" width="21" height="21" viewBox="0 0 21 21"><path d="M4.5 7H16.5L10.5 14.5Z" fill="#cbcbcb"/></svg>
<svg style="left:356px;top:301px;" width="21" height="21" viewBox="0 0 21 21"><rect x="4.5" y="14" width="12" height="1.8" fill="#cbcbcb"/><path d="M4.5 6H16.5L10.5 14Z" fill="#cbcbcb"/></svg>
<svg style="left:356px;top:328px;" width="22" height="22" viewBox="0 0 22 22"><rect x="4.5" y="4.5" width="8" height="8" fill="#e2e2e2" stroke="#cbcbcb"/><rect x="6.5" y="6.5" width="8" height="8" fill="#e2e2e2" stroke="#cbcbcb"/><rect x="9.5" y="9.5" width="8" height="8" fill="#e2e2e2" stroke="#cbcbcb" stroke-width="1.2"/><path d="M13.5 11.5V15.5M11.5 13.5H15.5" stroke="#cbcbcb"/></svg>
<svg style="left:356px;top:351px;" width="22" height="22" viewBox="0 0 22 22"><rect x="4.5" y="4.5" width="8" height="8" fill="#f0f0f0" stroke="#555"/><rect x="6.5" y="6.5" width="8" height="8" fill="#f0f0f0" stroke="#444"/><rect x="9.5" y="9.5" width="8" height="8" fill="#fff" stroke="#000" stroke-width="1.5"/><path d="M11.3 13.5H15.7" stroke="#000" stroke-width="1.6"/></svg>
<div style="left:385px;top:142px;width:468px;height:843px;background:#fff;border:1px solid #7b8fa9"></div>
<div style="left:386px;top:143px;width:466px;height:274px;background:#eeeeee"></div>
<div style="left:386px;top:161px;width:466px;height:16px;background:#b6cde6"></div>
<div style="left:386px;top:160px;width:466px;height:1px;background:#7b8fa9"></div>
<div style="left:423px;top:143px;width:1px;height:274px;background:#7b8fa9"></div>
<div style="left:424px;top:143px;width:1px;height:17px;background:#fbfbfb"></div>
<div style="left:598px;top:143px;width:1px;height:274px;background:#7b8fa9"></div>
<div style="left:599px;top:143px;width:1px;height:17px;background:#fbfbfb"></div>
<div style="left:848px;top:143px;width:1px;height:274px;background:#7b8fa9"></div>
<div style="left:849px;top:143px;width:1px;height:17px;background:#fbfbfb"></div>
<div style="left:386px;top:143px;width:1px;height:17px;background:#fbfbfb"></div>
<span class="t" style="left:395px;top:146px;letter-spacing:0.483px;">Use</span>
<span class="t" style="left:477px;top:146px;letter-spacing:0.184px;">Connections</span>
<span class="t" style="left:709px;top:146px;letter-spacing:0.137px;">Name</span>
<div class="cb cbw" style="left:398px;top:163px"><svg width="13" height="13" viewBox="0 0 13 13" style="left:-1px;top:-1px"><path d="M2.9 5H5L5.2 8L9.4 2.8L10.2 3.6L4.8 10.2H2.9Z" fill="#111"/></svg></div>
<svg style="left:604px;top:165px;" width="9" height="9" viewBox="0 0 9 9"><rect x="0.5" y="0.5" width="8" height="8" fill="#fff" stroke="#000"/><rect x="2" y="4" width="5" height="1" fill="#000"/></svg>
<svg style="left:618px;top:164px;" width="15" height="10" viewBox="0 0 15 10"><rect x="0" y="2" width="15" height="2" fill="#000"/><rect x="0" y="5" width="15" height="2" fill="#000"/><rect x="3" y="0" width="9" height="9" fill="#000"/><rect x="4" y="1" width="7" height="7" fill="#c3c3c3"/></svg>
<span class="t b" style="left:638px;top:163px;letter-spacing:0.228px;">emif_0</span>
<svg style="left:627px;top:181px;" width="13" height="8" viewBox="0 0 13 8"><path d="M0 0.5H4L6.5 2.5V5.5L4 7.5H0Z" fill="#000"/><rect x="6" y="2.7" width="6.5" height="2.6" fill="#000"/></svg>
<span class="t" style="left:646px;top:179px;letter-spacing:0.266px;">local_reset_req</span>
<svg style="left:627px;top:197px;" width="13" height="8" viewBox="0 0 13 8"><path d="M0 0.5H4L6.5 2.5V5.5L4 7.5H0Z" fill="#000"/><rect x="6" y="2.7" width="6.5" height="2.6" fill="#000"/></svg>
<span class="t" style="left:646px;top:195px;letter-spacing:0.304px;">local_reset_status</span>
<svg style="left:627px;top:213px;" width="13" height="8" viewBox="0 0 13 8"><path d="M0 0.5H4L6.5 2.5V5.5L4 7.5H0Z" fill="#000"/><rect x="6" y="2.7" width="6.5" height="2.6" fill="#000"/></svg>
<span class="t" style="left:646px;top:211px;letter-spacing:0.115px;">pll_ref_clk</span>
<svg style="left:627px;top:229px;" width="13" height="8" viewBox="0 0 13 8"><path d="M12.5 0.5H8.5L6 2.5V5.5L8.5 7.5H12.5Z" fill="#000"/><rect x="0" y="2.7" width="6.5" height="2.6" fill="#000"/></svg>
<span class="t" style="left:646px;top:227px;letter-spacing:0.117px;">pll_ref_clk_out</span>
<svg style="left:627px;top:245px;" width="13" height="8" viewBox="0 0 13 8"><path d="M0 0.5H4L6.5 2.5V5.5L4 7.5H0Z" fill="#000"/><rect x="6" y="2.7" width="6.5" height="2.6" fill="#000"/></svg>
<span class="t" style="left:646px;top:243px;letter-spacing:0.045px;">pll_locked</span>
<svg style="left:627px;top:261px;" width="13" height="8" viewBox="0 0 13 8"><path d="M0 0.5H4L6.5 2.5V5.5L4 7.5H0Z" fill="#000"/><rect x="6" y="2.7" width="6.5" height="2.6" fill="#000"/></svg>
<span class="t" style="left:646px;top:259px;letter-spacing:-0.030px;">oct</span>
<svg style="left:627px;top:277px;" width="13" height="8" viewBox="0 0 13 8"><path d="M0 0.5H4L6.5 2.5V5.5L4 7.5H0Z" fill="#000"/><rect x="6" y="2.7" width="6.5" height="2.6" fill="#000"/></svg>
<span class="t" style="left:646px;top:275px;letter-spacing:0.267px;">mem</span>
<svg style="left:627px;top:293px;" width="13" height="8" viewBox="0 0 13 8"><path d="M0 0.5H4L6.5 2.5V5.5L4 7.5H0Z" fill="#000"/><rect x="6" y="2.7" width="6.5" height="2.6" fill="#000"/></svg>
<span class="t" style="left:646px;top:291px;letter-spacing:0.367px;">status</span>
<svg style="left:627px;top:309px;" width="13" height="8" viewBox="0 0 13 8"><path d="M0 0.5H4L6.5 2.5V5.5L4 7.5H0Z" fill="#000"/><rect x="6" y="2.7" width="6.5" height="2.6" fill="#000"/></svg>
<span class="t" style="left:646px;top:307px;letter-spacing:0.233px;">emif_calbus</span>
<svg style="left:627px;top:325px;" width="13" height="8" viewBox="0 0 13 8"><path d="M0 0.5H4L6.5 2.5V5.5L4 7.5H0Z" fill="#000"/><rect x="6" y="2.7" width="6.5" height="2.6" fill="#000"/></svg>
<span class="t" style="left:646px;top:323px;letter-spacing:0.172px;">emif_calbus_clk</span>
<svg style="left:627px;top:341px;" width="13" height="8" viewBox="0 0 13 8"><path d="M12.5 0.5H8.5L6 2.5V5.5L8.5 7.5H12.5Z" fill="#000"/><rect x="0" y="2.7" width="6.5" height="2.6" fill="#000"/></svg>
<span class="t" style="left:646px;top:339px;letter-spacing:0.362px;">emif_usr_reset_n</span>
<svg style="left:627px;top:357px;" width="13" height="8" viewBox="0 0 13 8"><path d="M12.5 0.5H8.5L6 2.5V5.5L8.5 7.5H12.5Z" fill="#000"/><rect x="0" y="2.7" width="6.5" height="2.6" fill="#000"/></svg>
<span class="t" style="left:646px;top:355px;letter-spacing:0.241px;">emif_usr_clk</span>
<svg style="left:627px;top:373px;" width="13" height="8" viewBox="0 0 13 8"><path d="M0 0.5H4L6.5 2.5V5.5L4 7.5H0Z" fill="#000"/><rect x="6" y="2.7" width="6.5" height="2.6" fill="#000"/></svg>
<span class="t" style="left:646px;top:371px;letter-spacing:0.191px;">ctrl_ecc_user_interrupt_0</span>
<svg style="left:627px;top:389px;" width="13" height="8" viewBox="0 0 13 8"><path d="M0 0.5H4L6.5 2.5V5.5L4 7.5H0Z" fill="#000"/><rect x="6" y="2.7" width="6.5" height="2.6" fill="#000"/></svg>
<span class="t" style="left:646px;top:387px;letter-spacing:0.189px;">ctrl_amm_0</span>
<svg style="left:627px;top:405px;" width="13" height="8" viewBox="0 0 13 8"><path d="M0 0.5H4L6.5 2.5V5.5L4 7.5H0Z" fill="#000"/><rect x="6" y="2.7" width="6.5" height="2.6" fill="#000"/></svg>
<span class="t" style="left:646px;top:403px;letter-spacing:0.167px;">ctrl_auto_precharge_0</span>
<div style="left:849px;top:161px;width:3px;height:16px;background:#c3d6ec"></div>
<div style="left:851px;top:165px;width:1px;height:8px;background:#333"></div>
<div style="left:851px;top:183px;width:1px;height:4px;background:#444;opacity:.8"></div>
<div style="left:851px;top:199px;width:1px;height:4px;background:#444;opacity:.8"></div>
<div style="left:851px;top:215px;width:1px;height:4px;background:#444;opacity:.8"></div>
<div style="left:851px;top:231px;width:1px;height:4px;background:#444;opacity:.8"></div>
<div style="left:851px;top:247px;width:1px;height:4px;background:#444;opacity:.8"></div>
<div style="left:851px;top:263px;width:1px;height:4px;background:#444;opacity:.8"></div>
<div style="left:851px;top:279px;width:1px;height:4px;background:#444;opacity:.8"></div>
<div style="left:851px;top:295px;width:1px;height:4px;background:#444;opacity:.8"></div>
<div style="left:851px;top:311px;width:1px;height:4px;background:#444;opacity:.8"></div>
<div style="left:851px;top:327px;width:1px;height:4px;background:#444;opacity:.8"></div>
<div style="left:851px;top:343px;width:1px;height:4px;background:#444;opacity:.8"></div>
<div style="left:851px;top:359px;width:1px;height:4px;background:#444;opacity:.8"></div>
<div style="left:851px;top:375px;width:1px;height:4px;background:#444;opacity:.8"></div>
<div style="left:851px;top:391px;width:1px;height:4px;background:#444;opacity:.8"></div>
<div style="left:851px;top:407px;width:1px;height:4px;background:#444;opacity:.8"></div>
<svg style="left:424px;top:161px;overflow:hidden" width="174" height="256" viewBox="0 0 174 256"><path d="M151.5 103.5V215.5" stroke="#bdbdbd" stroke-width="1"/><path d="M55.5 23.5H174" stroke="#000" stroke-width="1.2"/><path d="M55.5 23.5V33.0" stroke="#000" stroke-width="1.2"/><circle cx="55.5" cy="23.5" r="3.6" fill="#000"/><path d="M71.5 39.5H174" stroke="#000" stroke-width="1.2"/><path d="M71.5 39.5V49.0" stroke="#000" stroke-width="1.2"/><circle cx="71.5" cy="39.5" r="3.6" fill="#000"/><path d="M168 55.5H174" stroke="#000" stroke-width="1.1"/><path d="M159.5 52.5H165L168 55.5L165 58.5H159.5Z" fill="#fff" stroke="#000" stroke-width="1.1"/><path d="M7.5 71.5H168.5" stroke="#c6c6c6" stroke-width="1"/><path d="M4.5 68.5L10.5 74.5M10.5 68.5L4.5 74.5" stroke="#c6c6c6" stroke-width="1"/><path d="M172.5 67.5L168.5 71.5L172.5 75.5" stroke="#c6c6c6" stroke-width="1" fill="none"/><path d="M87.5 87.5H174" stroke="#000" stroke-width="1.2"/><path d="M87.5 87.5V97.0" stroke="#000" stroke-width="1.2"/><circle cx="87.5" cy="87.5" r="3.6" fill="#000"/><path d="M151.5 103.5H162" stroke="#bdbdbd" stroke-width="1"/><path d="M170 103.5H174" stroke="#000" stroke-width="1.2"/><path d="M160.3 103.5L163.5 100.3H167.5L170.7 103.5L167.5 106.7H163.5Z" fill="#fff" stroke="#000" stroke-width="1.1"/><path d="M148.0 103.5L151.5 100.0L155.0 103.5L151.5 107.0Z" fill="#fff" stroke="#b9b9b9" stroke-width="1"/><path d="M151.5 119.5H162" stroke="#bdbdbd" stroke-width="1"/><path d="M170 119.5H174" stroke="#000" stroke-width="1.2"/><path d="M160.3 119.5L163.5 116.3H167.5L170.7 119.5L167.5 122.7H163.5Z" fill="#fff" stroke="#000" stroke-width="1.1"/><path d="M148.0 119.5L151.5 116.0L155.0 119.5L151.5 123.0Z" fill="#fff" stroke="#b9b9b9" stroke-width="1"/><path d="M103.5 135.5H174" stroke="#000" stroke-width="1.2"/><path d="M103.5 135.5V145.0" stroke="#000" stroke-width="1.2"/><circle cx="103.5" cy="135.5" r="3.6" fill="#000"/><path d="M119.5 151.5H174" stroke="#000" stroke-width="1.2"/><path d="M119.5 151.5V161.0" stroke="#000" stroke-width="1.2"/><circle cx="119.5" cy="151.5" r="3.6" fill="#000"/><path d="M23.5 183.5H168.5" stroke="#c6c6c6" stroke-width="1"/><path d="M20.5 180.5L26.5 186.5M26.5 180.5L20.5 186.5" stroke="#c6c6c6" stroke-width="1"/><path d="M172.5 179.5L168.5 183.5L172.5 187.5" stroke="#c6c6c6" stroke-width="1" fill="none"/><path d="M39.5 199.5H168.5" stroke="#c6c6c6" stroke-width="1"/><path d="M36.5 196.5L42.5 202.5M42.5 196.5L36.5 202.5" stroke="#c6c6c6" stroke-width="1"/><path d="M172.5 195.5L168.5 199.5L172.5 203.5" stroke="#c6c6c6" stroke-width="1" fill="none"/><path d="M151.5 215.5H174" stroke="#bdbdbd" stroke-width="1"/><path d="M148.0 215.5L151.5 212.0L155.0 215.5L151.5 219.0Z" fill="#fff" stroke="#b9b9b9" stroke-width="1"/><path d="M135.5 247.5H174" stroke="#000" stroke-width="1.2"/><path d="M135.5 247.5V257.0" stroke="#000" stroke-width="1.2"/><circle cx="135.5" cy="247.5" r="3.6" fill="#000"/></svg>
<div style="left:386px;top:969px;width:466px;height:1px;background:#7b8fa9"></div>
<div style="left:386px;top:970px;width:466px;height:14px;background:#eeeeee"></div>
<div style="left:386px;top:970px;width:15px;height:14px;background:#efefef;border-right:1px solid #c9c9c9"></div>
<svg style="left:391px;top:973px;" width="5" height="9" viewBox="0 0 5 9"><path d="M5 0V9L0 4.5Z" fill="#2b2b2b"/></svg>
<div style="left:837px;top:970px;width:15px;height:14px;background:#efefef;border-left:1px solid #9aa9bd"></div>
<svg style="left:843px;top:973px;" width="5" height="9" viewBox="0 0 5 9"><path d="M0 0V9L5 4.5Z" fill="#2b2b2b"/></svg>
<div style="left:401px;top:969px;width:130px;height:16px;border:1px solid #6585c2;background:linear-gradient(180deg,#dce7f5 0%,#ffffff 28%,#e6eef8 55%,#b6cde8 100%)"></div>
<svg style="left:462px;top:972px;" width="9" height="11" viewBox="0 0 9 11"><path d="M2.5 1V10M5 1V10M7.5 1V10" stroke="#5a7ac0" stroke-width="1"/></svg>
<div style="left:385px;top:994px;width:21px;height:21px;border:1px solid #9b9b9b;background:#f4f4f4"></div>
<div style="left:407px;top:994px;width:21px;height:21px;border:1px solid #9b9b9b;background:#f4f4f4"></div>
<div style="left:429px;top:994px;width:21px;height:21px;border:1px solid #9b9b9b;background:#f4f4f4"></div>
<div style="left:456px;top:994px;width:21px;height:21px;border:1px solid #9b9b9b;background:#f4f4f4"></div>
<div style="left:478px;top:994px;width:21px;height:21px;border:1px solid #cfcfcf;background:#f1f1f1"></div>
<div style="left:451px;top:993px;width:5px;height:24px;background:linear-gradient(180deg,#f6f6f6,#e4e4e4)"></div>
<svg style="left:385px;top:994px;" width="21" height="21" viewBox="0 0 21 21"><rect x="2" y="2" width="9" height="17" fill="#e6e6e6"/><path d="M3 12.5H5V8.5H8V12.5H13V10.5H15V12.5H16.5V10.5H18.5" stroke="#ee1c25" stroke-width="1" fill="none"/><rect x="9.5" y="2.5" width="2" height="16" fill="#0a3aa0"/></svg>
<svg style="left:407px;top:994px;" width="21" height="21" viewBox="0 0 21 21"><rect x="2" y="2" width="9" height="17" fill="#e6e6e6"/><path d="M2.5 14.5H6.5V6.5H14.5V14.5H18.5" stroke="#e8174b" stroke-width="1.2" fill="none"/><path d="M4 10.5L6.5 8L9 10.5M12 9.5H17" stroke="#e8174b" stroke-width="1.2" fill="none"/><rect x="9.5" y="2.5" width="2" height="16" fill="#2a56c0"/></svg>
<svg style="left:429px;top:994px;" width="21" height="21" viewBox="0 0 21 21"><rect x="4" y="4" width="13" height="13" fill="#cdddf6"/><rect x="2" y="2" width="7" height="17" fill="#e6e6e6"/><path d="M16 6.5H6.5V15.5H16.5" stroke="#000" stroke-width="1.4" fill="none"/><path d="M18 4L15.5 6.5L18 9" stroke="#000" stroke-width="1" fill="none"/><path d="M14.5 13L17.5 15.5L14.5 18" stroke="#000" stroke-width="1.4" fill="none"/></svg>
<svg style="left:456px;top:994px;" width="21" height="21" viewBox="0 0 21 21"><path d="M3 5.5Q10.5 3 18 5.5L12 12.5V17H9V12.5Z" fill="#ff9a0a"/><ellipse cx="10.5" cy="5.8" rx="5.5" ry="0.9" fill="#ffd79a"/></svg>
<svg style="left:478px;top:994px;" width="21" height="21" viewBox="0 0 21 21"><path d="M3 5.5Q10.5 3 18 5.5L12 12.5V17H9V12.5Z" fill="#cfcfcf"/><path d="M10 9L17.5 17.5M17.5 10L11 17" stroke="#c4c4c4" stroke-width="1.2"/></svg>
<span class="t b" style="left:506px;top:998px;"><span class="w" style="letter-spacing:0.108px">Current </span><span class="w" style="letter-spacing:0.019px">filter:</span></span>
<div style="left:605px;top:993px;width:183px;height:23px;border:1px solid #6f8fb8;background:#efefef;box-shadow:inset 0 0 0 1px #c9dbf0"></div>
<div style="left:768px;top:993px;width:20px;height:23px;border:1px solid #6f8fb8;background:linear-gradient(180deg,#ffffff 0%,#eef3f9 45%,#c3d5ea 100%)"></div>
<svg style="left:773px;top:1002px;" width="10" height="5" viewBox="0 0 10 5"><path d="M0 0H10L5.0 5Z" fill="#2b2b2b"/></svg>
<span class="t" style="left:608px;top:998px;"><span class="w" style="letter-spacing:-0.033px">All </span><span class="w" style="letter-spacing:0.202px">Interfaces</span></span>
<div class="pn" style="left:867px;top:57px;width:730px;height:757px;"></div>
<div style="left:867px;top:57px;width:132px;height:27px;background:#a6a6a6;border-radius:6px 0 0 0"></div>
<div style="left:867px;top:83px;width:730px;height:3px;background:#a6a6a6"></div>
<div style="left:867px;top:83px;width:3px;height:731px;background:#a6a6a6"></div>
<div style="left:1594px;top:83px;width:3px;height:731px;background:#a6a6a6"></div>
<div style="left:867px;top:811px;width:730px;height:3px;background:#a6a6a6"></div>
<svg style="left:875px;top:62px;" width="16" height="17" viewBox="0 0 16 17"><rect x="1" y="4" width="4" height="8" fill="#bdbdbd"/><rect x="3" y="13" width="12" height="3" fill="#bdbdbd"/><rect x="6" y="3" width="9" height="9" fill="#00a8ff"/><rect x="8.2" y="1.8" width="2.2" height="1.2" fill="#0a2ab0"/><rect x="4.6" y="6.3" width="1.2" height="1.8" fill="#0a2ab0"/><rect x="11" y="12" width="2" height="1" fill="#0a2ab0"/><path d="M5 3.4L11.4 9.6" stroke="#ffaa18" stroke-width="3"/><circle cx="4.3" cy="2.7" r="1.9" fill="#f0141e"/><circle cx="11.8" cy="9.9" r="1.2" fill="#000"/></svg>
<span class="t" style="left:898px;top:65px;letter-spacing:0.355px;">Parameters</span>
<svg style="left:981px;top:65px;" width="11" height="11" viewBox="0 0 11 11"><path d="M2.6 0.6Q0.2 0.2 0.6 2.6L3.5 5.5L0.6 8.4Q0.2 10.8 2.6 10.4L5.5 7.5L8.4 10.4Q10.8 10.8 10.4 8.4L7.5 5.5L10.4 2.6Q10.8 0.2 8.4 0.6L5.5 3.5Z" fill="#e6e6e6" fill-opacity=".55" stroke="#4f4f4f" stroke-width="1"/></svg>
<svg style="left:1541px;top:64px;" width="52" height="15" viewBox="0 0 52 15"><g stroke="#fff" stroke-width="2" stroke-linejoin="round" opacity=".9"><rect x="1" y="10" width="8" height="2" fill="#fff"/><rect x="18" y="5" width="10" height="9"/><rect x="39" y="4" width="12" height="9"/></g><rect x="1" y="10" width="8" height="2" fill="#000"/><rect x="18.5" y="5.5" width="9" height="8" fill="#fff" stroke="#000"/><rect x="18" y="5" width="10" height="3" fill="#000"/><path d="M25.5 5.5Q26 3.3 28.5 3.5H30" stroke="#000" stroke-width="1.3" fill="none"/><path d="M29 1L32.2 3.5L29 6Z" fill="#000"/><rect x="39.5" y="4.5" width="11" height="8" fill="#fff" stroke="#000"/><rect x="39" y="4" width="12" height="3" fill="#000"/></svg>
<span class="t b" style="left:870px;top:87px;letter-spacing:-0.031px;">System:</span>
<span class="t" style="left:926px;top:87px;letter-spacing:0.640px;">mem_ss</span>
<span class="t b" style="left:993px;top:87px;letter-spacing:0.005px;">Path:</span>
<span class="t" style="left:1032px;top:87px;letter-spacing:0.182px;">emif_0</span>
<div style="left:870px;top:100px;width:724px;height:1px;background:#8f8f8f"></div>
<span class="t b" style="left:876px;top:110px;"><span class="w" style="letter-spacing:-0.044px">HDL </span><span class="w" style="letter-spacing:0.060px">entity </span><span class="w" style="letter-spacing:0.085px">name:</span></span>
<div style="left:991px;top:107px;width:145px;height:18px;border:1px solid #b4cbe6;background:#efefef"></div>
<span class="t" style="left:993px;top:110px;letter-spacing:0.182px;">emif_0</span>
<span class="t b" style="left:1152px;top:110px;"><span class="w" style="letter-spacing:0.005px">IP </span><span class="w" style="letter-spacing:0.163px">file:</span></span>
<div style="left:1300px;top:107px;width:288px;height:18px;border:1px solid #b4cbe6;background:#efefef"></div>
<span class="t" style="left:1302px;top:110px;letter-spacing:0.313px;">ip/mem_ss/emif_0.ip</span>
<span class="t" style="left:876px;top:132px;"><span class="w" style="letter-spacing:-0.126px">Any </span><span class="w" style="letter-spacing:0.286px">changes </span><span class="w" style="letter-spacing:0.295px">here </span><span class="w" style="letter-spacing:0.068px">will </span><span class="w" style="letter-spacing:0.251px">be </span><span class="w" style="letter-spacing:0.070px">written </span><span class="w" style="letter-spacing:0.122px">out </span><span class="w" style="letter-spacing:0.153px">to </span><span class="w" style="letter-spacing:0.273px">disk </span><span class="w" style="letter-spacing:0.159px">when </span><span class="w" style="letter-spacing:0.113px">the </span><span class="w" style="letter-spacing:0.391px">system </span><span class="w" style="letter-spacing:0.572px">is </span><span class="w" style="letter-spacing:0.295px">saved.</span></span>
<div style="left:876px;top:151px;width:710px;height:594px;border:1px solid #7b8fa9;background:#eeeeee"></div>
<div style="left:876px;top:151px;width:711px;height:1px;background:#7b8fa9"></div>
<div style="left:877px;top:152px;width:710px;height:101px;background:linear-gradient(90deg,#ffffff 0%,#ffffff 34.5%,#dfe9f4 46%,#b4cde6 62%,#86afd8 80%,#5a93cc 93%,#3f80c2 100%)"></div>
<span class="t" style="left:883px;top:184px;font-size:18px;line-height:21px;"><span class="w" style="letter-spacing:-0.080px">External </span><span class="w" style="letter-spacing:0.153px">Memory </span><span class="w" style="letter-spacing:-0.244px">Interfaces </span><span class="w" style="letter-spacing:0.095px">(EMIF) </span><span class="w" style="letter-spacing:0.418px">IP</span></span>
<span class="t" style="left:884px;top:207px;letter-spacing:0.204px;">altera_emif_fm</span>
<div class="btn" style="left:1387px;top:158px;width:194px;height:24px;"></div>
<span class="t" style="left:1465px;top:164px;letter-spacing:0.124px;"><u>D</u>etails</span>
<div class="btn" style="left:1387px;top:188px;width:194px;height:24px;"></div>
<span class="t" style="left:1404px;top:194px;"><span class="w" style="letter-spacing:0.237px">Generate </span><span class="w" style="letter-spacing:0.098px">Example </span><span class="w" style="letter-spacing:0.281px">Design...</span></span>
<div style="left:877px;top:252px;width:710px;height:1px;background:#93a4bc"></div>
<div style="left:877px;top:253px;width:693px;height:477px;background:#eeeeee"></div>
<svg style="left:877px;top:253px;overflow:hidden" width="693" height="21" viewBox="0 0 693 21"><path d="M8.5 20.5V9.5L14.5 3.5H74.5V20.5" fill="#efefef" stroke="#8296b0" stroke-width="1"/><path d="M75.5 20.5V9.5L81.5 3.5H140.5V20.5" fill="#efefef" stroke="#8296b0" stroke-width="1"/><path d="M141.5 20.5V9.5L147.5 3.5H208.5V20.5" fill="#efefef" stroke="#8296b0" stroke-width="1"/><path d="M209.5 20.5V9.5L215.5 3.5H278.5V20.5" fill="#efefef" stroke="#8296b0" stroke-width="1"/><path d="M279.5 20.5V9.5L285.5 3.5H368.5V20.5" fill="#efefef" stroke="#8296b0" stroke-width="1"/><path d="M369.5 20.5V9.5L375.5 3.5H421.5V20.5" fill="#efefef" stroke="#8296b0" stroke-width="1"/><path d="M422.5 20.5V9.5L428.5 3.5H500.5V20.5" fill="#c6daf0" stroke="#5f7fc8" stroke-width="1"/><path d="M423.5 20V10L429.0 4.5H499.5" fill="none" stroke="#fff" stroke-width="1"/><path d="M501.5 20.5V9.5L507.5 3.5H587.5V20.5" fill="#efefef" stroke="#8296b0" stroke-width="1"/><path d="M588.5 20.5V9.5L594.5 3.5H698.5V20.5" fill="#efefef" stroke="#8296b0" stroke-width="1"/></svg>
<!-- -->
<span class="t" style="left:896px;top:258px;letter-spacing:0.236px;">General</span>
<!-- -->
<span class="t" style="left:962px;top:258px;letter-spacing:0.044px;">Memory</span>
<!-- -->
<span class="t" style="left:1028px;top:258px;"><span class="w" style="letter-spacing:0.132px">Mem </span><span class="w" style="letter-spacing:0.131px">I/O</span></span>
<!-- -->
<span class="t" style="left:1096px;top:258px;"><span class="w" style="letter-spacing:0.099px">FPGA </span><span class="w" style="letter-spacing:0.131px">I/O</span></span>
<!-- -->
<span class="t" style="left:1166px;top:258px;"><span class="w" style="letter-spacing:0.132px">Mem </span><span class="w" style="letter-spacing:0.083px">Timing</span></span>
<!-- -->
<span class="t" style="left:1255px;top:258px;letter-spacing:0.296px;">Board</span>
<!-- -->
<span class="t" style="left:1310px;top:258px;letter-spacing:0.165px;">Controller</span>
<!-- -->
<span class="t" style="left:1387px;top:258px;letter-spacing:0.197px;">Diagnostics</span>
<!-- -->
<span class="t" style="left:1474px;top:258px;"><span class="w" style="letter-spacing:0.098px">Example </span><span class="w" style="letter-spacing:0.327px">Designs</span></span>
<div style="left:883px;top:273px;width:687px;height:457px;border-left:1px solid #6585c2;border-top:1px solid #6585c2"></div>
<div style="left:884px;top:274px;width:686px;height:2px;background:#c3d8f0"></div>
<div style="left:884px;top:274px;width:2px;height:456px;background:#c3d8f0"></div>
<div class="sec" style="left:890px;top:292px;width:680px;height:16px;border-right:none"></div>
<svg style="left:892.5px;top:297.5px;" width="7" height="4" viewBox="0 0 7 4"><path d="M0 0H7L3.5 4Z" fill="#7d7d7d"/></svg>
<span class="t b" style="left:905px;top:294px;"><span class="w" style="letter-spacing:0.360px">Low </span><span class="w" style="letter-spacing:0.251px">Power </span><span class="w" style="letter-spacing:0.291px">Mode</span></span>
<div class="sec" style="left:890px;top:376px;width:680px;height:16px;border-right:none"></div>
<svg style="left:892.5px;top:381.5px;" width="7" height="4" viewBox="0 0 7 4"><path d="M0 0H7L3.5 4Z" fill="#7d7d7d"/></svg>
<span class="t b" style="left:905px;top:378px;letter-spacing:0.287px;">Efficiency</span>
<div class="sec" style="left:890px;top:656px;width:680px;height:16px;border-right:none"></div>
<svg style="left:892.5px;top:661.5px;" width="7" height="4" viewBox="0 0 7 4"><path d="M0 0H7L3.5 4Z" fill="#7d7d7d"/></svg>
<span class="t b" style="left:905px;top:658px;"><span class="w" style="letter-spacing:0.200px">Configuration, </span><span class="w" style="letter-spacing:0.133px">Status </span><span class="w" style="letter-spacing:0.261px">and </span><span class="w" style="letter-spacing:-0.029px">Error </span><span class="w" style="letter-spacing:0.177px">Handling</span></span>
<div class="cb" style="left:904px;top:317px"></div>
<span class="t" style="left:921px;top:317px;"><span class="w" style="letter-spacing:0.148px">Enable </span><span class="w" style="letter-spacing:-0.007px">Auto </span><span class="w" style="letter-spacing:0.121px">Power-Down</span></span>
<span class="t" style="left:900px;top:345px;"><span class="w" style="letter-spacing:-0.007px">Auto </span><span class="w" style="letter-spacing:0.156px">Power-Down </span><span class="w" style="letter-spacing:0.214px">Cycles:</span></span>
<div style="left:1236px;top:338px;width:179px;height:26px;border:1px solid #b4cbe6;background:#fff"></div>
<span class="t" style="left:1238px;top:345px;color:#b4cbe6;letter-spacing:0.001px;">32</span>
<span class="t" style="left:1421px;top:345px;color:#8e8e8e;letter-spacing:0.201px;">Cycles</span>
<div class="cb" style="left:904px;top:401px"></div>
<span class="t" style="left:921px;top:401px;"><span class="w" style="letter-spacing:0.148px">Enable </span><span class="w" style="letter-spacing:0.486px">User </span><span class="w" style="letter-spacing:0.278px">Refresh </span><span class="w" style="letter-spacing:0.142px">Control</span></span>
<div class="cb" style="left:904px;top:429px"><svg width="13" height="13" viewBox="0 0 13 13" style="left:-1px;top:-1px"><path d="M2.9 5H5L5.2 8L9.4 2.8L10.2 3.6L4.8 10.2H2.9Z" fill="#111"/></svg></div>
<span class="t" style="left:921px;top:429px;"><span class="w" style="letter-spacing:0.148px">Enable </span><span class="w" style="letter-spacing:0.136px">Auto-Precharge </span><span class="w" style="letter-spacing:0.142px">Control</span></span>
<span class="t" style="left:900px;top:457px;"><span class="w" style="letter-spacing:0.408px">Address </span><span class="w" style="letter-spacing:0.203px">Ordering:</span></span>
<div style="left:1236px;top:450px;width:160px;height:26px;border:1px solid #6f87a8;background:#eeeeee;box-shadow:inset 0 0 0 1px #c3d7ef"></div>
<div style="left:1395px;top:450px;width:20px;height:26px;border:1px solid #8f8f8f;background:#eeeeee"></div>
<svg style="left:1400px;top:461px;" width="10" height="5" viewBox="0 0 10 5"><path d="M0 0H10L5.0 5Z" fill="#a9c4e6"/></svg>
<span class="t" style="left:1239px;top:456px;color:#b4cbe6;letter-spacing:0.116px;">CS-CID-Row-Bank-Col-BG</span>
<div class="cb" style="left:904px;top:485px"><svg width="13" height="13" viewBox="0 0 13 13" style="left:-1px;top:-1px"><path d="M2.9 5H5L5.2 8L9.4 2.8L10.2 3.6L4.8 10.2H2.9Z" fill="#111"/></svg></div>
<span class="t" style="left:921px;top:485px;"><span class="w" style="letter-spacing:0.148px">Enable </span><span class="w" style="letter-spacing:0.105px">Reordering</span></span>
<span class="t" style="left:900px;top:513px;"><span class="w" style="letter-spacing:0.148px">Starvation </span><span class="w" style="letter-spacing:0.051px">limit </span><span class="w" style="letter-spacing:0.345px">for </span><span class="w" style="letter-spacing:0.195px">each </span><span class="w" style="letter-spacing:0.174px">command:</span></span>
<div style="left:1236px;top:506px;width:178px;height:25px;border:1px solid #8f8f8f;background:#fff;box-shadow:inset 0 0 0 1px #dfe9f4"></div>
<span class="t" style="left:1238px;top:513px;letter-spacing:0.001px;">10</span>
<div class="cb" style="left:904px;top:541px"></div>
<span class="t" style="left:921px;top:541px;"><span class="w" style="letter-spacing:0.148px">Enable </span><span class="w" style="letter-spacing:0.246px">Command </span><span class="w" style="letter-spacing:0.129px">Priority </span><span class="w" style="letter-spacing:0.142px">Control</span></span>
<div class="cb" style="left:904px;top:569px"></div>
<span class="t" style="left:921px;top:569px;"><span class="w" style="letter-spacing:0.148px">Enable </span><span class="w" style="letter-spacing:0.162px">controller </span><span class="w" style="letter-spacing:0.290px">major </span><span class="w" style="letter-spacing:0.201px">mode</span></span>
<div class="cb" style="left:904px;top:597px"></div>
<span class="t" style="left:921px;top:597px;"><span class="w" style="letter-spacing:0.148px">Enable </span><span class="w" style="letter-spacing:0.162px">controller </span><span class="w" style="letter-spacing:0.172px">post-pay </span><span class="w" style="letter-spacing:0.406px">refresh</span></span>
<div class="cb" style="left:904px;top:625px"></div>
<span class="t" style="left:921px;top:625px;"><span class="w" style="letter-spacing:0.148px">Enable </span><span class="w" style="letter-spacing:0.162px">controller </span><span class="w" style="letter-spacing:0.129px">pre-pay </span><span class="w" style="letter-spacing:0.406px">refresh</span></span>
<div class="cb cbd" style="left:904px;top:681px"></div>
<span class="t" style="left:921px;top:681px;color:#9c9c9c;"><span class="w" style="letter-spacing:0.148px">Enable </span><span class="w" style="letter-spacing:0.061px">Memory-Mapped </span><span class="w" style="letter-spacing:0.136px">Configuration </span><span class="w" style="letter-spacing:0.202px">and </span><span class="w" style="letter-spacing:0.350px">Status </span><span class="w" style="letter-spacing:0.191px">Register </span><span class="w" style="letter-spacing:-0.284px">(MMR) </span><span class="w" style="letter-spacing:0.084px">Interface</span></span>
<div class="cb" style="left:904px;top:709px"><svg width="13" height="13" viewBox="0 0 13 13" style="left:-1px;top:-1px"><path d="M2.9 5H5L5.2 8L9.4 2.8L10.2 3.6L4.8 10.2H2.9Z" fill="#111"/></svg></div>
<span class="t" style="left:921px;top:709px;"><span class="w" style="letter-spacing:0.148px">Enable </span><span class="w" style="letter-spacing:0.376px">Error </span><span class="w" style="letter-spacing:0.007px">Detection </span><span class="w" style="letter-spacing:0.202px">and </span><span class="w" style="letter-spacing:0.197px">Correction </span><span class="w" style="letter-spacing:0.093px">Logic </span><span class="w" style="letter-spacing:0.033px">with </span><span class="w" style="letter-spacing:0.229px">ECC</span></span>
<div style="left:1297px;top:249px;width:82px;height:27px;border:3px solid #ed1c24"></div>
<div style="left:891px;top:697px;width:352px;height:29px;border:3px solid #ed1c24"></div>
<div style="left:1570px;top:253px;width:16px;height:477px;background:#eeeeee;border-left:1px solid #8ea1bb;border-right:1px solid #8ea1bb"></div>
<div style="left:1570px;top:253px;width:16px;height:16px;border:1px solid #8ea1bb;background:#efefef;border-top:none"></div>
<svg style="left:1574px;top:258px;" width="9" height="5" viewBox="0 0 9 5"><path d="M0 5H9L4.5 0Z" fill="#2b2b2b"/></svg>
<div style="left:1570px;top:713px;width:16px;height:16px;border:1px solid #8ea1bb;background:#efefef"></div>
<svg style="left:1574px;top:719px;" width="9" height="5" viewBox="0 0 9 5"><path d="M0 0H9L4.5 5Z" fill="#2b2b2b"/></svg>
<div style="left:1570px;top:295px;width:16px;height:183px;border:1px solid #6585c2;background:linear-gradient(90deg,#ffffff 0%,#f3f7fc 30%,#d6e3f2 60%,#b4cbe6 100%)"></div>
<svg style="left:1573px;top:383px;" width="11" height="9" viewBox="0 0 11 9"><path d="M1 2.5H10M1 4.5H10M1 6.5H10" stroke="#5a7ac0" stroke-width="1"/></svg>
<div style="left:877px;top:729px;width:709px;height:1px;background:#7b8fa9"></div>
<div style="left:877px;top:730px;width:709px;height:15px;background:#eeeeee;border-bottom:1px solid #8ea1bb"></div>
<div style="left:878px;top:730px;width:15px;height:14px;background:#efefef"></div>
<svg style="left:882px;top:733px;" width="5" height="9" viewBox="0 0 5 9"><path d="M5 0V9L0 4.5Z" fill="#2b2b2b"/></svg>
<div style="left:1554px;top:730px;width:16px;height:15px;background:#efefef;border-left:1px solid #8ea1bb;border-right:1px solid #8ea1bb"></div>
<svg style="left:1560px;top:733px;" width="5" height="9" viewBox="0 0 5 9"><path d="M0 0V9L5 4.5Z" fill="#2b2b2b"/></svg>
<div style="left:893px;top:729px;width:502px;height:16px;border:1px solid #6585c2;background:linear-gradient(180deg,#dce7f5 0%,#ffffff 28%,#e6eef8 55%,#b6cde8 100%)"></div>
<svg style="left:1140px;top:732px;" width="9" height="11" viewBox="0 0 9 11"><path d="M2.5 1V10M5 1V10M7.5 1V10" stroke="#5a7ac0" stroke-width="1"/></svg>
<div style="left:876px;top:749px;width:712px;height:1px;background:#7b8fa9"></div>
<div style="left:876px;top:749px;width:1px;height:55px;background:#7b8fa9"></div>
<span class="t b" style="left:881px;top:757px;"><span class="w" style="letter-spacing:0.162px">Parameterization </span><span class="w" style="letter-spacing:0.399px">Messages</span></span>
<div style="left:877px;top:778px;width:709px;height:25px;border:1px solid #7b8fa9;background:#eeeeee"></div>
<div style="left:878px;top:779px;width:707px;height:1px;background:#fbfbfb"></div>
<div style="left:952px;top:779px;width:1px;height:17px;background:#8ea1bb"></div>
<div style="left:953px;top:779px;width:1px;height:17px;background:#fbfbfb"></div>
<div style="left:878px;top:796px;width:707px;height:1px;background:#6585c2"></div>
<span class="t" style="left:905px;top:782px;letter-spacing:0.005px;">Type</span>
<span class="t" style="left:1435px;top:782px;letter-spacing:0.398px;">Message</span>
<svg style="left:1570px;top:778px;" width="16" height="19" viewBox="0 0 16 19"><rect x="0.5" y="0.5" width="15" height="18" fill="#c3d8ee" stroke="#6f87a0"/><rect x="2.5" y="2.5" width="11.5" height="13" fill="#dcdcfc" stroke="#8878b4"/><path d="M10.5 3V15M2.5 6.5H14M2.5 11H14" stroke="#a99cd0" stroke-width="1"/><polygon points="5.4,3.8 6.1,6.8 8.7,5.1 7.0,7.7 10.0,8.4 7.0,9.1 8.7,11.7 6.1,10.0 5.4,13.0 4.7,10.0 2.1,11.7 3.8,9.1 0.8,8.4 3.8,7.7 2.1,5.1 4.7,6.8" fill="#f2a60c"/><circle cx="5.4" cy="8.4" r="1.6" fill="#ffe23c"/><path d="M5.2 8L13.4 16.6" stroke="#111" stroke-width="1.9"/><path d="M5.4 8.2L7.6 10.5" stroke="#e8e8e8" stroke-width="1.1"/></svg>
<div style="left:878px;top:797px;width:15px;height:5px;background:#efefef;border-right:1px solid #c9c9c9"></div>
<div style="left:884px;top:799px;width:1px;height:2px;background:#000"></div>
<div style="left:893px;top:797px;width:423px;height:6px;border:1px solid #6585c2;border-bottom:none;background:#dbe7f4"></div>
<div style="left:1554px;top:797px;width:16px;height:5px;background:#efefef;border-left:1px solid #8ea1bb;border-right:1px solid #8ea1bb"></div>
<div style="left:1562px;top:799px;width:1px;height:2px;background:#000"></div>
<div class="pn" style="left:867px;top:818px;width:730px;height:208px;"></div>
<div class="tab" style="left:867px;top:818px;width:108px;height:26px;"></div>
<div style="left:975px;top:819px;width:1px;height:26px;background:#a3a3a3"></div>
<div style="left:975px;top:844px;width:622px;height:1px;background:#a3a3a3"></div>
<svg style="left:874px;top:823px;" width="18" height="18" viewBox="0 0 18 18"><circle cx="9.3" cy="10.6" r="6.1" fill="#fff" stroke="#3a5ad0" stroke-width="1.1"/><circle cx="9.3" cy="10.6" r="4.4" fill="#1634b4"/><circle cx="9.8" cy="11.4" r="3" fill="#0a1e96" opacity=".6"/><path d="M9.2 10.4L6.6 7.6" stroke="#f2a81c" stroke-width="1.2"/><path d="M4.9 5.2L8.4 5.9L5.7 8.6Z" fill="#fbb21c"/><circle cx="9.3" cy="10.7" r="1.5" fill="#f6ea62"/><text x="0.6" y="6" font-family="DejaVu Sans,Liberation Sans,sans-serif" font-size="5.8" font-weight="bold" fill="#2a4ec0">A</text><text x="13.6" y="6" font-family="DejaVu Sans,Liberation Sans,sans-serif" font-size="5.8" font-weight="bold" fill="#2a4ec0">B</text></svg>
<span class="t" style="left:898px;top:826px;letter-spacing:0.505px;">Presets</span>
<svg style="left:958px;top:826px;" width="11" height="11" viewBox="0 0 11 11"><path d="M2.6 0.6Q0.2 0.2 0.6 2.6L3.5 5.5L0.6 8.4Q0.2 10.8 2.6 10.4L5.5 7.5L8.4 10.4Q10.8 10.8 10.4 8.4L7.5 5.5L10.4 2.6Q10.8 0.2 8.4 0.6L5.5 3.5Z" fill="#e6e6e6" fill-opacity=".55" stroke="#4f4f4f" stroke-width="1"/></svg>
<svg style="left:1541px;top:825px;" width="52" height="15" viewBox="0 0 52 15"><g stroke="#fff" stroke-width="2" stroke-linejoin="round" opacity=".9"><rect x="1" y="10" width="8" height="2" fill="#fff"/><rect x="18" y="5" width="10" height="9"/><rect x="39" y="4" width="12" height="9"/></g><rect x="1" y="10" width="8" height="2" fill="#000"/><rect x="18.5" y="5.5" width="9" height="8" fill="#fff" stroke="#000"/><rect x="18" y="5" width="10" height="3" fill="#000"/><path d="M25.5 5.5Q26 3.3 28.5 3.5H30" stroke="#000" stroke-width="1.3" fill="none"/><path d="M29 1L32.2 3.5L29 6Z" fill="#000"/><rect x="39.5" y="4.5" width="11" height="8" fill="#fff" stroke="#000"/><rect x="39" y="4" width="12" height="3" fill="#000"/></svg>
<span class="t" style="left:876px;top:854px;"><span class="w" style="letter-spacing:0.505px">Presets </span><span class="w" style="letter-spacing:0.345px">for </span><span class="w" style="letter-spacing:0.182px">emif_0</span></span>
<div class="cb" style="left:880px;top:878px"><svg width="13" height="13" viewBox="0 0 13 13" style="left:-1px;top:-1px"><path d="M2.9 5H5L5.2 8L9.4 2.8L10.2 3.6L4.8 10.2H2.9Z" fill="#111"/></svg></div>
<span class="t i" style="left:897px;top:878px;"><span class="w" style="letter-spacing:0.165px">Show </span><span class="w" style="letter-spacing:0.211px">presets </span><span class="w" style="letter-spacing:0.345px">for </span><span class="w" style="letter-spacing:0.113px">the </span><span class="w" style="letter-spacing:0.119px">selected </span><span class="w" style="letter-spacing:0.208px">board</span></span>
<div class="cb" style="left:880px;top:906px"></div>
<span class="t i" style="left:897px;top:906px;"><span class="w" style="letter-spacing:0.289px">Clear </span><span class="w" style="letter-spacing:0.203px">preset </span><span class="w" style="letter-spacing:0.097px">filters</span></span>
<div style="left:876px;top:929px;width:712px;height:20px;background:#fff"></div>
<div style="left:876px;top:929px;width:710px;height:18px;background:#fff;border:1px solid #a9a9a9"></div>
<svg style="left:879px;top:932px;" width="14" height="14" viewBox="0 0 14 14"><path d="M8.2 8.2L11.8 11.8" stroke="#c98a3c" stroke-width="2.6" stroke-linecap="round"/><path d="M8.6 8.6L11.6 11.6" stroke="#e8b878" stroke-width="1" stroke-linecap="round"/><circle cx="5" cy="5" r="4.6" fill="#cfe2f8" stroke="#8db4ea" stroke-width="1.1"/><circle cx="4.2" cy="4" r="2.2" fill="#e4effc"/></svg>
<svg style="left:1572px;top:932px;" width="13" height="13" viewBox="0 0 13 13"><path d="M2 2L11 11M11 2L2 11" stroke="#8c8c8c" stroke-width="3" stroke-linecap="round"/><rect x="5.3" y="5.3" width="2.4" height="2.4" fill="#757575"/></svg>
<div style="left:876px;top:955px;width:712px;height:21px;background:#fff"></div>
<div style="left:876px;top:955px;width:711px;height:21px;border:1px solid #7b8fa9;background:#fff"></div>
<span class="t" style="left:877px;top:957px;letter-spacing:0.133px;">Project</span>
<div style="left:884px;top:971px;width:1px;height:4px;background:#9db8e0"></div>
<span class="t" style="left:897px;top:972px;height:13px;clip-path:inset(0 0 10px 0);color:#333">Click New... to create a preset.</span>
<div style="left:1572px;top:956px;width:14px;height:19px;background:#efefef;border-left:1px solid #8ea1bb"></div>
<div style="left:1572px;top:965px;width:14px;height:1px;background:#8ea1bb"></div>
<svg style="left:1577px;top:959px;" width="5" height="3" viewBox="0 0 5 3"><path d="M0 3H5L2.5 0Z" fill="#2b2b2b"/></svg>
<svg style="left:1577px;top:969px;" width="5" height="3" viewBox="0 0 5 3"><path d="M0 0H5L2.5 3Z" fill="#2b2b2b"/></svg>
<div class="btnd" style="left:876px;top:993px;width:64px;height:24px;"></div>
<span class="t" style="left:893px;top:999px;color:#9c9c9c;letter-spacing:-0.211px;">Apply</span>
<div class="btnd" style="left:950px;top:993px;width:72px;height:24px;"></div>
<span class="t" style="left:967px;top:999px;color:#9c9c9c;letter-spacing:0.166px;">View...</span>
<div class="btnd" style="left:1028px;top:993px;width:70px;height:24px;"></div>
<span class="t" style="left:1045px;top:999px;color:#9c9c9c;letter-spacing:-0.024px;">Delete</span>
<div style="left:1518px;top:993px;width:70px;height:24px;border:1px solid #7088a4;background:linear-gradient(180deg,#f3f7fb 0%,#ffffff 20%,#f0f5fa 48%,#d5e2f0 55%,#bdd0e8 100%)"></div>
<span class="t" style="left:1535px;top:999px;letter-spacing:0.253px;">New...</span>
<div style="left:0px;top:0px;width:1603px;height:1032px;border:1px solid #6f6f6f;pointer-events:none"></div>
</div>
</body></html>
